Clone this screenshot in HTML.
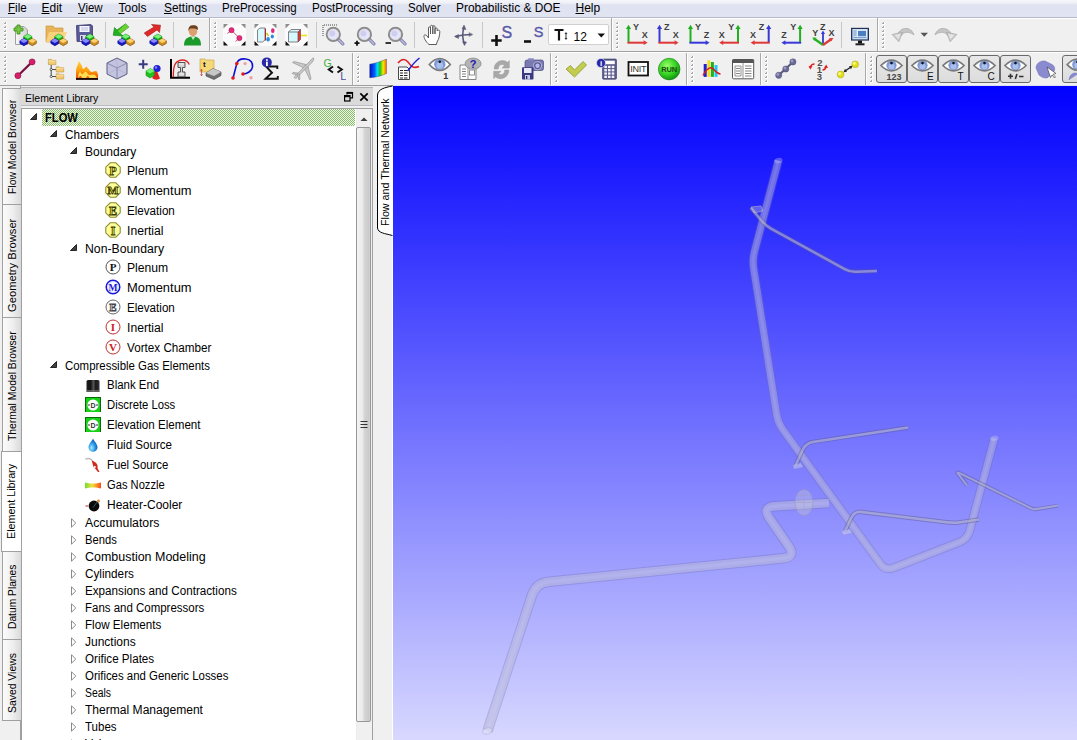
<!DOCTYPE html>
<html><head><meta charset="utf-8">
<style>
*{box-sizing:border-box}
html,body{margin:0;padding:0}
body{width:1077px;height:740px;overflow:hidden;position:relative;background:#f0f0f0;font-family:"Liberation Sans",sans-serif;color:#000}
.a{position:absolute}
.t{position:absolute;white-space:nowrap;line-height:1;font-size:12px}
#menubar{left:0;top:0;width:1077px;height:18px;background:linear-gradient(#f5f6fa 0,#eff0f7 3px,#dfe2f0 5px,#e1e4f1 16px,#e3e6f2 17px);border-bottom:1px solid #b6b9c8}
#menubar .t{top:2px;font-size:12px;color:#000}
.u{text-decoration:underline;text-underline-offset:1px}
.hl{left:0;width:1077px;height:1px}
.grip{position:absolute;width:3px;background-image:radial-gradient(circle at 1px 1px,#9a9a9a 0.9px,transparent 1.1px);background-size:3px 4px}
.vsep{position:absolute;width:2px;border-left:1px solid #c5c5c5;border-right:1px solid #ffffff}
.tbend{position:absolute;width:2px;border-left:1px solid #a9a9a9;border-right:1px solid #fff}
.tab{left:2px;width:19px;border:1px solid #a0a0a0;border-right:none;background:linear-gradient(90deg,#fbfbfb 0,#eeeeee 55%,#d9d9d9 100%)}
.tab.sel{left:1px;width:20px;background:#fff;border-color:#a0a0a0}
.rt{position:absolute;white-space:nowrap;font-size:11px;line-height:1;transform-origin:0 0}
.vt{position:absolute;left:50%;top:50%;white-space:nowrap;font-size:11px;line-height:11px;text-align:center;transform:translate(-50%,-50%) rotate(-90deg)}
</style></head>
<body>
<svg width="0" height="0" style="position:absolute">
<defs>
<linearGradient id="gnoz" x1="0" x2="1"><stop offset="0" stop-color="#6ee02a"/><stop offset="0.45" stop-color="#f0e040"/><stop offset="1" stop-color="#ff4a10"/></linearGradient>
<radialGradient id="gdrop" cx="0.35" cy="0.7" r="0.7"><stop offset="0" stop-color="#a8e8ff"/><stop offset="0.5" stop-color="#2a9ee8"/><stop offset="1" stop-color="#0a50b8"/></radialGradient>
<linearGradient id="gblank" x1="0" x2="1"><stop offset="0" stop-color="#222"/><stop offset="0.3" stop-color="#111"/><stop offset="0.55" stop-color="#555"/><stop offset="0.7" stop-color="#1a1a1a"/><stop offset="1" stop-color="#333"/></linearGradient>
<symbol id="oct" viewBox="0 0 16 16"><path d="M5.2 0.8 L10.8 0.8 L15.2 5.2 L15.2 10.8 L10.8 15.2 L5.2 15.2 L0.8 10.8 L0.8 5.2 Z" fill="#ffff9a" stroke="#8c8c30" stroke-width="1.1"/></symbol>
<symbol id="i-bP" viewBox="0 0 16 16"><use href="#oct"/><text x="8" y="12.6" font-family="Liberation Serif" font-weight="bold" font-size="12" text-anchor="middle" fill="#f8f040" stroke="#3a3a08" stroke-width="0.8">P</text></symbol>
<symbol id="i-bM" viewBox="0 0 16 16"><use href="#oct"/><text x="8" y="12.3" font-family="Liberation Serif" font-weight="bold" font-size="11" text-anchor="middle" fill="#f8f040" stroke="#3a3a08" stroke-width="0.8" textLength="11" lengthAdjust="spacingAndGlyphs">M</text></symbol>
<symbol id="i-bE" viewBox="0 0 16 16"><use href="#oct"/><text x="8" y="12.6" font-family="Liberation Serif" font-weight="bold" font-size="12" text-anchor="middle" fill="#f8f040" stroke="#3a3a08" stroke-width="0.8">E</text></symbol>
<symbol id="i-bI" viewBox="0 0 16 16"><use href="#oct"/><text x="8" y="12.6" font-family="Liberation Serif" font-weight="bold" font-size="12" text-anchor="middle" fill="#f8f040" stroke="#3a3a08" stroke-width="0.8">I</text></symbol>
<symbol id="i-nP" viewBox="0 0 16 16"><circle cx="8" cy="8" r="7" fill="#fff" stroke="#555" stroke-width="1"/><text x="8" y="12.2" font-family="Liberation Serif" font-weight="bold" font-size="11" text-anchor="middle" fill="#111">P</text></symbol>
<symbol id="i-nM" viewBox="0 0 16 16"><circle cx="8" cy="8" r="6.8" fill="#fff" stroke="#1818d8" stroke-width="1.5"/><circle cx="8" cy="8" r="5.3" fill="none" stroke="#c8c8ff" stroke-width="0.8"/><text x="8" y="11.8" font-family="Liberation Serif" font-weight="bold" font-size="10" text-anchor="middle" fill="#1818d8" textLength="9" lengthAdjust="spacingAndGlyphs">M</text></symbol>
<symbol id="i-nE" viewBox="0 0 16 16"><circle cx="8" cy="8" r="7" fill="#fff" stroke="#666" stroke-width="1"/><text x="8" y="12.2" font-family="Liberation Serif" font-weight="bold" font-size="11" text-anchor="middle" fill="#e8e8e8" stroke="#444" stroke-width="0.8">E</text></symbol>
<symbol id="i-nI" viewBox="0 0 16 16"><circle cx="8" cy="8" r="7" fill="#fff" stroke="#c03030" stroke-width="1"/><text x="8" y="12.2" font-family="Liberation Serif" font-weight="bold" font-size="11" text-anchor="middle" fill="#d02020">I</text></symbol>
<symbol id="i-nV" viewBox="0 0 16 16"><circle cx="8" cy="8" r="7" fill="#fff" stroke="#c03030" stroke-width="1"/><text x="8" y="12.2" font-family="Liberation Serif" font-weight="bold" font-size="11" text-anchor="middle" fill="#d02020">V</text></symbol>
<symbol id="i-blank" viewBox="0 0 16 16"><rect x="1.5" y="4" width="13" height="13" rx="1.5" fill="url(#gblank)"/><rect x="2" y="14" width="12" height="3" fill="#777" opacity="0.7"/></symbol>
<symbol id="i-disc" viewBox="0 0 16 16"><rect x="0.5" y="1.5" width="15" height="15" fill="#16d016" stroke="#0a6a0a"/><circle cx="8" cy="9" r="5.6" fill="#fff"/><path d="M2.8 9 L5 9 M13.2 9 L11 9" stroke="#333" stroke-width="1"/><text x="8" y="11.6" font-family="Liberation Sans" font-weight="bold" font-size="7" text-anchor="middle" fill="#333">D</text></symbol>
<symbol id="i-drop" viewBox="0 0 16 16"><path d="M8 2.5 C9 5 12.5 8 12.5 11.3 C12.5 14 10.5 15.8 8 15.8 C5.5 15.8 3.5 14 3.5 11.3 C3.5 8 7 5 8 2.5 Z" fill="url(#gdrop)"/></symbol>
<symbol id="i-fuel" viewBox="0 0 16 16"><path d="M0.5 3 C3 2 5 2.3 7 4" stroke="#bbb" stroke-width="1.6" fill="none"/><path d="M6.5 4 L10.5 6.5 C12.5 8 13 10.5 12.5 12 L14.5 16 L13 16 L10.5 13 L8.5 11 Z" fill="#d02a20"/><circle cx="9.8" cy="11" r="1" fill="#fff"/></symbol>
<symbol id="i-nozzle" viewBox="0 0 16 16"><path d="M0 6.5 L5 7.6 L11 7.6 L16 6.5 L16 12.5 L11 11.4 L5 11.4 L0 12.5 Z" fill="url(#gnoz)"/></symbol>
<symbol id="i-heater" viewBox="0 0 16 16"><circle cx="9" cy="10" r="5.4" fill="#0a0a0a"/><path d="M0.5 10 L3 10" stroke="#d04040" stroke-width="1.2"/><path d="M8 11.5 L12.5 5.5" stroke="#3a6a8a" stroke-width="0.8"/><circle cx="13.5" cy="5" r="1.4" fill="#e08a30"/></symbol>
</defs></svg>

<!-- menu bar -->
<div id="menubar" class="a">
  <span class="t" style="left:7.5px;transform:scaleX(0.967);transform-origin:0 0"><span class="u">F</span>ile</span>
  <span class="t" style="left:41.5px;transform:scaleX(1.0);transform-origin:0 0"><span class="u">E</span>dit</span>
  <span class="t" style="left:77.5px;transform:scaleX(0.954);transform-origin:0 0"><span class="u">V</span>iew</span>
  <span class="t" style="left:118.5px;transform:scaleX(1.0);transform-origin:0 0"><span class="u">T</span>ools</span>
  <span class="t" style="left:163.5px;transform:scaleX(0.99);transform-origin:0 0"><span class="u">S</span>ettings</span>
  <span class="t" style="left:221.5px;transform:scaleX(0.958);transform-origin:0 0">PreProcessing</span>
  <span class="t" style="left:311.5px;transform:scaleX(0.971);transform-origin:0 0">PostProcessing</span>
  <span class="t" style="left:407.5px;transform:scaleX(0.958);transform-origin:0 0">Solver</span>
  <span class="t" style="left:455.5px;transform:scaleX(0.992);transform-origin:0 0">Probabilistic &amp; DOE</span>
  <span class="t" style="left:575.5px;transform:scaleX(1.0);transform-origin:0 0"><span class="u">H</span>elp</span>
</div>
<div class="a hl" style="top:18px;background:#fff"></div>
<!-- toolbar row separators -->
<div class="a hl" style="top:51px;background:#a0a0a0"></div>
<div class="a hl" style="top:52px;background:#fff"></div>
<div class="a hl" style="top:85px;background:#a0a0a0;width:393px"></div><div class="a" style="left:393px;top:85px;width:684px;height:1px;background:#dcdcf4"></div>

<!-- toolbar -->
<div class="a" style="left:4px;top:22px;width:2px;height:2px;background:linear-gradient(135deg,transparent 0 30%,#a8a8a8 30% 100%);border-right:1px solid #fff;border-bottom:1px solid #fff;box-sizing:content-box"></div><div class="a" style="left:4px;top:26px;width:2px;height:2px;background:linear-gradient(135deg,transparent 0 30%,#a8a8a8 30% 100%);border-right:1px solid #fff;border-bottom:1px solid #fff;box-sizing:content-box"></div><div class="a" style="left:4px;top:30px;width:2px;height:2px;background:linear-gradient(135deg,transparent 0 30%,#a8a8a8 30% 100%);border-right:1px solid #fff;border-bottom:1px solid #fff;box-sizing:content-box"></div><div class="a" style="left:4px;top:34px;width:2px;height:2px;background:linear-gradient(135deg,transparent 0 30%,#a8a8a8 30% 100%);border-right:1px solid #fff;border-bottom:1px solid #fff;box-sizing:content-box"></div><div class="a" style="left:4px;top:38px;width:2px;height:2px;background:linear-gradient(135deg,transparent 0 30%,#a8a8a8 30% 100%);border-right:1px solid #fff;border-bottom:1px solid #fff;box-sizing:content-box"></div><div class="a" style="left:4px;top:42px;width:2px;height:2px;background:linear-gradient(135deg,transparent 0 30%,#a8a8a8 30% 100%);border-right:1px solid #fff;border-bottom:1px solid #fff;box-sizing:content-box"></div><div class="a" style="left:4px;top:46px;width:2px;height:2px;background:linear-gradient(135deg,transparent 0 30%,#a8a8a8 30% 100%);border-right:1px solid #fff;border-bottom:1px solid #fff;box-sizing:content-box"></div>
<svg class="a" style="left:13px;top:23px" width="24" height="24" viewBox="0 0 24 24"><defs><linearGradient id="pg" x1="0" x2="1"><stop offset="0" stop-color="#fafafa"/><stop offset="1" stop-color="#d0d0d0"/></linearGradient></defs><path d="M2.5 3.5 H11 L14.5 7 V21.5 H2.5 Z" fill="url(#pg)" stroke="#a0a0a0"/><path d="M4 2 h3 v3 h3 v3 h-3 v3 h-3 v-3 h-3 v-3 h3 Z" fill="#72c83e" stroke="#3a8a1a" stroke-width="0.8"/><path d="M10.8 13.4 L14.8 11.100000000000001 L18.8 13.4 L18.8 16.0 L14.8 18.3 L10.8 16.0 Z" fill="#10b010" stroke="#0a700a" stroke-width="0.7"/><path d="M10.8 13.4 L14.8 11.100000000000001 L18.8 13.4 L14.8 15.7 Z" fill="#7cf07c"/><path d="M6.9 17.8 L10.9 15.5 L14.9 17.8 L14.9 20.400000000000002 L10.9 22.700000000000003 L6.9 20.400000000000002 Z" fill="#1a1acc" stroke="#0a0a80" stroke-width="0.7"/><path d="M6.9 17.8 L10.9 15.5 L14.9 17.8 L10.9 20.1 Z" fill="#8a8aff"/><path d="M15.3 17.8 L19.3 15.5 L23.3 17.8 L23.3 20.400000000000002 L19.3 22.700000000000003 L15.3 20.400000000000002 Z" fill="#d09020" stroke="#805010" stroke-width="0.7"/><path d="M15.3 17.8 L19.3 15.5 L23.3 17.8 L19.3 20.1 Z" fill="#ffd070"/></svg>
<svg class="a" style="left:44px;top:23px" width="24" height="24" viewBox="0 0 24 24"><path d="M2 3 H9 L11 5 H19 V19 H2 Z" fill="#e8b45a" stroke="#c89030" stroke-width="0.6"/><path d="M5 9 H23 L19 19 H2 Z" fill="#f8d480" opacity="0.9"/><path d="M10.8 13.4 L14.8 11.100000000000001 L18.8 13.4 L18.8 16.0 L14.8 18.3 L10.8 16.0 Z" fill="#10b010" stroke="#0a700a" stroke-width="0.7"/><path d="M10.8 13.4 L14.8 11.100000000000001 L18.8 13.4 L14.8 15.7 Z" fill="#7cf07c"/><path d="M6.9 17.8 L10.9 15.5 L14.9 17.8 L14.9 20.400000000000002 L10.9 22.700000000000003 L6.9 20.400000000000002 Z" fill="#1a1acc" stroke="#0a0a80" stroke-width="0.7"/><path d="M6.9 17.8 L10.9 15.5 L14.9 17.8 L10.9 20.1 Z" fill="#8a8aff"/><path d="M15.3 17.8 L19.3 15.5 L23.3 17.8 L23.3 20.400000000000002 L19.3 22.700000000000003 L15.3 20.400000000000002 Z" fill="#d09020" stroke="#805010" stroke-width="0.7"/><path d="M15.3 17.8 L19.3 15.5 L23.3 17.8 L19.3 20.1 Z" fill="#ffd070"/></svg>
<svg class="a" style="left:75px;top:23px" width="24" height="24" viewBox="0 0 24 24"><path d="M1.5 2.5 L16 1.5 L17.5 3 V18 L2 18.5 Z" fill="#5a5a98" stroke="#3a3a70" stroke-width="0.8"/><rect x="4.5" y="3" width="10" height="6" fill="#f4f4ff"/><path d="M6 5 H13 M6 7 H13" stroke="#b0b0d0" stroke-width="0.8"/><rect x="5" y="12" width="6" height="6" fill="#d8d8f0"/><rect x="6" y="13" width="1.5" height="4" fill="#3a3a70"/><path d="M10.8 13.4 L14.8 11.100000000000001 L18.8 13.4 L18.8 16.0 L14.8 18.3 L10.8 16.0 Z" fill="#10b010" stroke="#0a700a" stroke-width="0.7"/><path d="M10.8 13.4 L14.8 11.100000000000001 L18.8 13.4 L14.8 15.7 Z" fill="#7cf07c"/><path d="M6.9 17.8 L10.9 15.5 L14.9 17.8 L14.9 20.400000000000002 L10.9 22.700000000000003 L6.9 20.400000000000002 Z" fill="#1a1acc" stroke="#0a0a80" stroke-width="0.7"/><path d="M6.9 17.8 L10.9 15.5 L14.9 17.8 L10.9 20.1 Z" fill="#8a8aff"/><path d="M15.3 17.8 L19.3 15.5 L23.3 17.8 L23.3 20.400000000000002 L19.3 22.700000000000003 L15.3 20.400000000000002 Z" fill="#d09020" stroke="#805010" stroke-width="0.7"/><path d="M15.3 17.8 L19.3 15.5 L23.3 17.8 L19.3 20.1 Z" fill="#ffd070"/></svg>
<div class="a" style="left:105px;top:22px;width:1px;height:26px;background:#c8c8c8"></div>
<svg class="a" style="left:111px;top:23px" width="24" height="24" viewBox="0 0 24 24"><path d="M2.2 12.3 L3.5 4.5 L6 7 L14.5 0.8 L17.8 4 L9.5 10.5 L12 13 Z" fill="#22b022" stroke="#168016" stroke-width="0.6"/><path d="M14.5 0.8 L17.8 4 L9.5 10.5 L7 8" fill="#8ae03a" opacity="0.7"/><path d="M10.8 13.4 L14.8 11.100000000000001 L18.8 13.4 L18.8 16.0 L14.8 18.3 L10.8 16.0 Z" fill="#10b010" stroke="#0a700a" stroke-width="0.7"/><path d="M10.8 13.4 L14.8 11.100000000000001 L18.8 13.4 L14.8 15.7 Z" fill="#7cf07c"/><path d="M6.9 17.8 L10.9 15.5 L14.9 17.8 L14.9 20.400000000000002 L10.9 22.700000000000003 L6.9 20.400000000000002 Z" fill="#1a1acc" stroke="#0a0a80" stroke-width="0.7"/><path d="M6.9 17.8 L10.9 15.5 L14.9 17.8 L10.9 20.1 Z" fill="#8a8aff"/><path d="M15.3 17.8 L19.3 15.5 L23.3 17.8 L23.3 20.400000000000002 L19.3 22.700000000000003 L15.3 20.400000000000002 Z" fill="#d09020" stroke="#805010" stroke-width="0.7"/><path d="M15.3 17.8 L19.3 15.5 L23.3 17.8 L19.3 20.1 Z" fill="#ffd070"/></svg>
<svg class="a" style="left:143px;top:23px" width="24" height="24" viewBox="0 0 24 24"><path d="M17.5 2.2 L16.5 9.5 L14 7 L4.5 13.5 L1.2 10 L11 4 L8.5 1.5 Z" fill="#e02a2a" stroke="#a01818" stroke-width="0.6"/><path d="M10.8 13.4 L14.8 11.100000000000001 L18.8 13.4 L18.8 16.0 L14.8 18.3 L10.8 16.0 Z" fill="#10b010" stroke="#0a700a" stroke-width="0.7"/><path d="M10.8 13.4 L14.8 11.100000000000001 L18.8 13.4 L14.8 15.7 Z" fill="#7cf07c"/><path d="M6.9 17.8 L10.9 15.5 L14.9 17.8 L14.9 20.400000000000002 L10.9 22.700000000000003 L6.9 20.400000000000002 Z" fill="#1a1acc" stroke="#0a0a80" stroke-width="0.7"/><path d="M6.9 17.8 L10.9 15.5 L14.9 17.8 L10.9 20.1 Z" fill="#8a8aff"/><path d="M15.3 17.8 L19.3 15.5 L23.3 17.8 L23.3 20.400000000000002 L19.3 22.700000000000003 L15.3 20.400000000000002 Z" fill="#d09020" stroke="#805010" stroke-width="0.7"/><path d="M15.3 17.8 L19.3 15.5 L23.3 17.8 L19.3 20.1 Z" fill="#ffd070"/></svg>
<div class="a" style="left:173px;top:22px;width:1px;height:26px;background:#c8c8c8"></div>
<svg class="a" style="left:180px;top:23px" width="24" height="24" viewBox="0 0 24 24"><path d="M4 22.5 C4 16 7.5 13.5 13 13.5 C18.5 13.5 21 16 21 22.5 Z" fill="#1a9a2a"/><path d="M11 13.5 L13 17 L15.5 13.5" fill="#c8f0c8"/><ellipse cx="13" cy="8.3" rx="4.2" ry="5" fill="#dca070"/><path d="M8.5 8 C8 3 11 2 13.5 2.2 C17 2.3 18.5 4 17.8 7 C16 5 13 5.5 10 5.5 Z" fill="#6a4020"/></svg>
<div class="a" style="left:209px;top:18px;width:1px;height:33px;background:#a9a9a9"></div><div class="a" style="left:210px;top:18px;width:1px;height:33px;background:#fff"></div>
<div class="a" style="left:214px;top:22px;width:2px;height:2px;background:linear-gradient(135deg,transparent 0 30%,#a8a8a8 30% 100%);border-right:1px solid #fff;border-bottom:1px solid #fff;box-sizing:content-box"></div><div class="a" style="left:214px;top:26px;width:2px;height:2px;background:linear-gradient(135deg,transparent 0 30%,#a8a8a8 30% 100%);border-right:1px solid #fff;border-bottom:1px solid #fff;box-sizing:content-box"></div><div class="a" style="left:214px;top:30px;width:2px;height:2px;background:linear-gradient(135deg,transparent 0 30%,#a8a8a8 30% 100%);border-right:1px solid #fff;border-bottom:1px solid #fff;box-sizing:content-box"></div><div class="a" style="left:214px;top:34px;width:2px;height:2px;background:linear-gradient(135deg,transparent 0 30%,#a8a8a8 30% 100%);border-right:1px solid #fff;border-bottom:1px solid #fff;box-sizing:content-box"></div><div class="a" style="left:214px;top:38px;width:2px;height:2px;background:linear-gradient(135deg,transparent 0 30%,#a8a8a8 30% 100%);border-right:1px solid #fff;border-bottom:1px solid #fff;box-sizing:content-box"></div><div class="a" style="left:214px;top:42px;width:2px;height:2px;background:linear-gradient(135deg,transparent 0 30%,#a8a8a8 30% 100%);border-right:1px solid #fff;border-bottom:1px solid #fff;box-sizing:content-box"></div><div class="a" style="left:214px;top:46px;width:2px;height:2px;background:linear-gradient(135deg,transparent 0 30%,#a8a8a8 30% 100%);border-right:1px solid #fff;border-bottom:1px solid #fff;box-sizing:content-box"></div>
<svg class="a" style="left:223px;top:23px" width="24" height="24" viewBox="0 0 24 24"><rect x="0" y="0.5" width="23" height="22.5" fill="#fbfbfb"/><path d="M0.5 1 H5 L0.5 5.5 Z M22.5 1 H18 L22.5 5.5 Z" fill="#8c8c8c"/><path d="M0.5 22.5 H5 L0.5 18 Z M22.5 22.5 H18 L22.5 18 Z" fill="#111"/><path d="M4.3 10.5 L8.5 7.2 L16.4 15.1 L12.5 18.5" stroke="#c03060" stroke-width="0.8" fill="none"/><circle cx="8.5" cy="7.2" r="2.6" fill="#e8287a" stroke="#a01850" stroke-width="0.5"/><circle cx="16.4" cy="15.1" r="2.6" fill="#e8287a" stroke="#a01850" stroke-width="0.5"/></svg>
<svg class="a" style="left:254px;top:23px" width="24" height="24" viewBox="0 0 24 24"><rect x="0" y="0.5" width="23" height="22.5" fill="#fbfbfb"/><path d="M0.5 1 H5 L0.5 5.5 Z M22.5 1 H18 L22.5 5.5 Z" fill="#8c8c8c"/><path d="M0.5 22.5 H5 L0.5 18 Z M22.5 22.5 H18 L22.5 18 Z" fill="#111"/><path d="M3.5 7 L6 5 H11 V17 L8.5 19 H3.5 Z" fill="#d8f8ff" stroke="#505050" stroke-width="0.7"/><path d="M11 5 L12 6 V18 L11 17" fill="#c02020"/><path d="M12.5 10 L14.5 13" stroke="#e0c020" stroke-width="1.5"/><ellipse cx="14.1" cy="16.3" rx="1.8" ry="2.2" fill="#2a8ae0"/><ellipse cx="18.3" cy="13.5" rx="1.6" ry="1.9" fill="#2a8ae0"/><ellipse cx="18.8" cy="7.7" rx="1.8" ry="2.4" fill="#e0287a"/></svg>
<svg class="a" style="left:285px;top:23px" width="24" height="24" viewBox="0 0 24 24"><rect x="0" y="0.5" width="23" height="22.5" fill="#fbfbfb"/><path d="M0.5 1 H5 L0.5 5.5 Z M22.5 1 H18 L22.5 5.5 Z" fill="#8c8c8c"/><path d="M0.5 22.5 H5 L0.5 18 Z M22.5 22.5 H18 L22.5 18 Z" fill="#111"/><path d="M3.5 9 L6 6.5 H15.5 V16.5 L13 19 H3.5 Z" fill="#d8f8ff" stroke="#505050" stroke-width="0.7"/><path d="M3.5 9 H13 V19 M13 9 L15.5 6.5" stroke="#505050" stroke-width="0.7" fill="none"/><path d="M13 9 L15.5 6.5 V16.5 L13 19 Z" fill="#c82020" opacity="0.85"/><path d="M16 12.5 H22" stroke="#f0e020" stroke-width="1.6"/></svg>
<div class="a" style="left:316px;top:22px;width:1px;height:26px;background:#c8c8c8"></div>
<svg class="a" style="left:321px;top:23px" width="24" height="24" viewBox="0 0 24 24"><path d="M2 13 V2 H17" fill="none" stroke="#333" stroke-width="0.9" stroke-dasharray="1 1"/><path d="M17.1 16.2 L21.8 20.9" stroke="#7878a0" stroke-width="3.2" stroke-linecap="round"/><path d="M17.1 16.2 L21.8 20.9" stroke="#b8b8e0" stroke-width="1.6" stroke-linecap="round"/><circle cx="12.3" cy="11.4" r="6.6" fill="none" stroke="#8a8a8a" stroke-width="2"/><circle cx="12.3" cy="11.4" r="5.4" fill="#e6e6fa" stroke="#c8c8c8" stroke-width="0.6"/><circle cx="11.3" cy="10.4" r="3" fill="#c8c8f0" opacity="0.8"/></svg>
<svg class="a" style="left:352px;top:23px" width="24" height="24" viewBox="0 0 24 24"><path d="M17.2 16.2 L21.9 20.9" stroke="#7878a0" stroke-width="3.2" stroke-linecap="round"/><path d="M17.2 16.2 L21.9 20.9" stroke="#b8b8e0" stroke-width="1.6" stroke-linecap="round"/><circle cx="12.4" cy="11.4" r="6.6" fill="none" stroke="#8a8a8a" stroke-width="2"/><circle cx="12.4" cy="11.4" r="5.4" fill="#e6e6fa" stroke="#c8c8c8" stroke-width="0.6"/><circle cx="11.4" cy="10.4" r="3" fill="#c8c8f0" opacity="0.8"/><path d="M5 17.7 V22.7 M2.5 20.2 H7.5" stroke="#111" stroke-width="1.8"/></svg>
<svg class="a" style="left:383px;top:23px" width="24" height="24" viewBox="0 0 24 24"><path d="M17.3 16.2 L22.0 20.9" stroke="#7878a0" stroke-width="3.2" stroke-linecap="round"/><path d="M17.3 16.2 L22.0 20.9" stroke="#b8b8e0" stroke-width="1.6" stroke-linecap="round"/><circle cx="12.5" cy="11.4" r="6.6" fill="none" stroke="#8a8a8a" stroke-width="2"/><circle cx="12.5" cy="11.4" r="5.4" fill="#e6e6fa" stroke="#c8c8c8" stroke-width="0.6"/><circle cx="11.5" cy="10.4" r="3" fill="#c8c8f0" opacity="0.8"/><path d="M2.5 20 H8" stroke="#222" stroke-width="1.8"/></svg>
<div class="a" style="left:414px;top:22px;width:1px;height:26px;background:#c8c8c8"></div>
<svg class="a" style="left:421px;top:23px" width="24" height="24" viewBox="0 0 24 24"><path d="M8 21.5 C5 19 2.5 14.5 3 12.5 C3.5 11.5 5 11.8 6 13 L7.5 15 V5 C7.5 3.5 9.5 3.5 9.5 5 V11 V3.5 C9.5 1.8 11.8 1.8 11.8 3.5 V11 V3.8 C11.8 2.2 14 2.2 14 3.8 V11 V6 C14 4.5 16.2 4.5 16.2 6 V8 C16.5 6.8 18.8 6.8 18.8 8.5 C18.8 12 18 16 16 19 L15.5 21.5 Z" fill="#fff" stroke="#5a5a5a" stroke-width="1"/></svg>
<svg class="a" style="left:452px;top:23px" width="24" height="24" viewBox="0 0 24 24"><g fill="#5a5a7a" stroke="#5a5a7a"><path d="M12 4 C10.5 9 10 15 12.5 21" fill="none" stroke-width="1.6"/><path d="M3.5 13.5 C9 12 14 11.5 19.5 11.5" fill="none" stroke-width="1.6"/><path d="M12 2 L14 6.5 L10 6 Z" stroke-width="0.5"/><path d="M12.5 22.5 L10.5 18.5 L14.5 19 Z" stroke-width="0.5"/><path d="M2.5 13.5 L6.5 11.5 L6.5 15.5 Z" stroke-width="0.5"/><path d="M21 11.5 L17 9.5 L17 13.5 Z" stroke-width="0.5" opacity="0.7"/></g></svg>
<div class="a" style="left:482px;top:22px;width:1px;height:26px;background:#c8c8c8"></div>
<svg class="a" style="left:489px;top:23px" width="24" height="24" viewBox="0 0 24 24"><path d="M7.5 12 V23 M2.2 17.5 H12.7" stroke="#111" stroke-width="2.6"/><text x="12.6" y="14.8" font-family="Liberation Sans" font-size="16" fill="#5a5aa8" stroke="#5a5aa8" stroke-width="0.4">S</text></svg>
<svg class="a" style="left:521px;top:23px" width="24" height="24" viewBox="0 0 24 24"><path d="M3 18.5 H10" stroke="#111" stroke-width="2.6"/><text x="12.8" y="14.2" font-family="Liberation Sans" font-size="14.5" fill="#5a5aa8" stroke="#5a5aa8" stroke-width="0.4">S</text></svg>
<div class="a" style="left:548px;top:24px;width:61px;height:21px;background:#fff;border:1px solid #d0d0d0;border-radius:2px"></div>
<svg class="a" style="left:554px;top:28px" width="16" height="14"><path d="M0.5 2 H9.5 M5 2 V12.5" stroke="#111" stroke-width="2.2"/><path d="M12 5 V11" stroke="#333" stroke-width="1"/><path d="M10.5 6 L12 4 L13.5 6 Z M10.5 10 L12 12 L13.5 10 Z" fill="#333"/></svg>
<span class="t" style="left:573.5px;top:30.5px;font-size:12px">12</span>
<svg class="a" style="left:597px;top:33px" width="9" height="5"><path d="M0.5 0.5 H8 L4.25 4.5 Z" fill="#111"/></svg>
<div class="a" style="left:611px;top:18px;width:1px;height:33px;background:#a9a9a9"></div><div class="a" style="left:612px;top:18px;width:1px;height:33px;background:#fff"></div>
<div class="a" style="left:616px;top:22px;width:2px;height:2px;background:linear-gradient(135deg,transparent 0 30%,#a8a8a8 30% 100%);border-right:1px solid #fff;border-bottom:1px solid #fff;box-sizing:content-box"></div><div class="a" style="left:616px;top:26px;width:2px;height:2px;background:linear-gradient(135deg,transparent 0 30%,#a8a8a8 30% 100%);border-right:1px solid #fff;border-bottom:1px solid #fff;box-sizing:content-box"></div><div class="a" style="left:616px;top:30px;width:2px;height:2px;background:linear-gradient(135deg,transparent 0 30%,#a8a8a8 30% 100%);border-right:1px solid #fff;border-bottom:1px solid #fff;box-sizing:content-box"></div><div class="a" style="left:616px;top:34px;width:2px;height:2px;background:linear-gradient(135deg,transparent 0 30%,#a8a8a8 30% 100%);border-right:1px solid #fff;border-bottom:1px solid #fff;box-sizing:content-box"></div><div class="a" style="left:616px;top:38px;width:2px;height:2px;background:linear-gradient(135deg,transparent 0 30%,#a8a8a8 30% 100%);border-right:1px solid #fff;border-bottom:1px solid #fff;box-sizing:content-box"></div><div class="a" style="left:616px;top:42px;width:2px;height:2px;background:linear-gradient(135deg,transparent 0 30%,#a8a8a8 30% 100%);border-right:1px solid #fff;border-bottom:1px solid #fff;box-sizing:content-box"></div><div class="a" style="left:616px;top:46px;width:2px;height:2px;background:linear-gradient(135deg,transparent 0 30%,#a8a8a8 30% 100%);border-right:1px solid #fff;border-bottom:1px solid #fff;box-sizing:content-box"></div>
<svg class="a" style="left:622px;top:23px" width="28" height="24" viewBox="0 0 28 24"><path d="M6.5 20 V5" stroke="#20b020" stroke-width="2"/><path d="M6.5 1.8 L9.1 6 L3.9 6 Z" fill="#20b020"/><path d="M5.5 19.7 H22.6" stroke="#e03838" stroke-width="2"/><path d="M25.6 19.7 L21.6 17.3 L21.6 22.1 Z" fill="#e03838"/><text x="11.0" y="7.3999999999999995" font-family="Liberation Sans" font-weight="bold" font-size="9" fill="#404040">Y</text><text x="19.7" y="15.4" font-family="Liberation Sans" font-weight="bold" font-size="9" fill="#404040">X</text></svg>
<svg class="a" style="left:653px;top:23px" width="28" height="24" viewBox="0 0 28 24"><path d="M6.5 20 V5" stroke="#3838d8" stroke-width="2"/><path d="M6.5 1.8 L9.1 6 L3.9 6 Z" fill="#3838d8"/><path d="M5.5 19.7 H22.6" stroke="#e03838" stroke-width="2"/><path d="M25.6 19.7 L21.6 17.3 L21.6 22.1 Z" fill="#e03838"/><text x="11.0" y="7.3999999999999995" font-family="Liberation Sans" font-weight="bold" font-size="9" fill="#404040">Z</text><text x="19.7" y="15.4" font-family="Liberation Sans" font-weight="bold" font-size="9" fill="#404040">X</text></svg>
<svg class="a" style="left:684px;top:23px" width="28" height="24" viewBox="0 0 28 24"><path d="M6.5 20 V5" stroke="#20b020" stroke-width="2"/><path d="M6.5 1.8 L9.1 6 L3.9 6 Z" fill="#20b020"/><path d="M5.5 19.7 H22.6" stroke="#3838d8" stroke-width="2"/><path d="M25.6 19.7 L21.6 17.3 L21.6 22.1 Z" fill="#3838d8"/><text x="11.0" y="7.3999999999999995" font-family="Liberation Sans" font-weight="bold" font-size="9" fill="#404040">Y</text><text x="19.7" y="15.4" font-family="Liberation Sans" font-weight="bold" font-size="9" fill="#404040">Z</text></svg>
<svg class="a" style="left:716px;top:23px" width="28" height="24" viewBox="0 0 28 24"><path d="M22 20 V5" stroke="#20b020" stroke-width="2"/><path d="M22 1.8 L24.6 6 L19.4 6 Z" fill="#20b020"/><path d="M23 19.7 H6.2" stroke="#e03838" stroke-width="2"/><path d="M3.2 19.7 L7.2 17.3 L7.2 22.1 Z" fill="#e03838"/><text x="2.7" y="15.4" font-family="Liberation Sans" font-weight="bold" font-size="9" fill="#404040">X</text><text x="12.2" y="7.3999999999999995" font-family="Liberation Sans" font-weight="bold" font-size="9" fill="#404040">Y</text></svg>
<svg class="a" style="left:747px;top:23px" width="28" height="24" viewBox="0 0 28 24"><path d="M21.7 20 V5" stroke="#3838d8" stroke-width="2"/><path d="M21.7 1.8 L24.3 6 L19.099999999999998 6 Z" fill="#3838d8"/><path d="M22.7 19.7 H6.6" stroke="#e03838" stroke-width="2"/><path d="M3.6 19.7 L7.6 17.3 L7.6 22.1 Z" fill="#e03838"/><text x="2.9000000000000004" y="15.4" font-family="Liberation Sans" font-weight="bold" font-size="9" fill="#404040">X</text><text x="11.7" y="7.3999999999999995" font-family="Liberation Sans" font-weight="bold" font-size="9" fill="#404040">Z</text></svg>
<svg class="a" style="left:778px;top:23px" width="28" height="24" viewBox="0 0 28 24"><path d="M22.1 20 V5" stroke="#20b020" stroke-width="2"/><path d="M22.1 1.8 L24.700000000000003 6 L19.5 6 Z" fill="#20b020"/><path d="M23.1 19.7 H6.4" stroke="#3838d8" stroke-width="2"/><path d="M3.4 19.7 L7.4 17.3 L7.4 22.1 Z" fill="#3838d8"/><text x="3.2" y="15.4" font-family="Liberation Sans" font-weight="bold" font-size="9" fill="#404040">Z</text><text x="12.2" y="7.3999999999999995" font-family="Liberation Sans" font-weight="bold" font-size="9" fill="#404040">Y</text></svg>
<svg class="a" style="left:809px;top:23px" width="28" height="24" viewBox="0 0 28 24"><path d="M14 22 V10" stroke="#3838d8" stroke-width="1.8"/><path d="M14 7.5 L16 11 L12 11 Z" fill="#3838d8"/><path d="M14 22 L5 15.5" stroke="#20b020" stroke-width="2.2"/><path d="M3.2 14.5 L7.5 14.8 L5.5 18 Z" fill="#20b020"/><path d="M14 22 L22.5 16" stroke="#e03838" stroke-width="2.2"/><path d="M24.5 15 L20 15.2 L22 18.5 Z" fill="#e03838"/><text x="3.3" y="12.8" font-family="Liberation Sans" font-weight="bold" font-size="9" fill="#404040">Y</text><text x="11" y="6.5" font-family="Liberation Sans" font-weight="bold" font-size="9" fill="#404040">Z</text><text x="19.5" y="12.8" font-family="Liberation Sans" font-weight="bold" font-size="9" fill="#404040">X</text></svg>
<div class="a" style="left:841px;top:22px;width:1px;height:26px;background:#c8c8c8"></div>
<svg class="a" style="left:848px;top:23px" width="24" height="24" viewBox="0 0 24 24"><rect x="3" y="4.8" width="18" height="12.8" fill="#223355"/><rect x="4.3" y="6" width="15.4" height="10.4" fill="#c8dcf4"/><rect x="9.5" y="7.3" width="9" height="6.5" fill="#4a80c0" stroke="#ffffff" stroke-width="0.8"/><path d="M5.3 8 H8.5 M5.3 10 H8.5 M5.3 12 H8.5 M5.3 14.5 H18.5" stroke="#6a90c0" stroke-width="0.8"/><rect x="10" y="17.6" width="4" height="3" fill="#111"/><rect x="7.5" y="20.3" width="9" height="2" fill="#222"/></svg>
<div class="a" style="left:877px;top:18px;width:1px;height:33px;background:#a9a9a9"></div><div class="a" style="left:878px;top:18px;width:1px;height:33px;background:#fff"></div>
<div class="a" style="left:882px;top:22px;width:2px;height:2px;background:linear-gradient(135deg,transparent 0 30%,#a8a8a8 30% 100%);border-right:1px solid #fff;border-bottom:1px solid #fff;box-sizing:content-box"></div><div class="a" style="left:882px;top:26px;width:2px;height:2px;background:linear-gradient(135deg,transparent 0 30%,#a8a8a8 30% 100%);border-right:1px solid #fff;border-bottom:1px solid #fff;box-sizing:content-box"></div><div class="a" style="left:882px;top:30px;width:2px;height:2px;background:linear-gradient(135deg,transparent 0 30%,#a8a8a8 30% 100%);border-right:1px solid #fff;border-bottom:1px solid #fff;box-sizing:content-box"></div><div class="a" style="left:882px;top:34px;width:2px;height:2px;background:linear-gradient(135deg,transparent 0 30%,#a8a8a8 30% 100%);border-right:1px solid #fff;border-bottom:1px solid #fff;box-sizing:content-box"></div><div class="a" style="left:882px;top:38px;width:2px;height:2px;background:linear-gradient(135deg,transparent 0 30%,#a8a8a8 30% 100%);border-right:1px solid #fff;border-bottom:1px solid #fff;box-sizing:content-box"></div><div class="a" style="left:882px;top:42px;width:2px;height:2px;background:linear-gradient(135deg,transparent 0 30%,#a8a8a8 30% 100%);border-right:1px solid #fff;border-bottom:1px solid #fff;box-sizing:content-box"></div><div class="a" style="left:882px;top:46px;width:2px;height:2px;background:linear-gradient(135deg,transparent 0 30%,#a8a8a8 30% 100%);border-right:1px solid #fff;border-bottom:1px solid #fff;box-sizing:content-box"></div>
<svg class="a" style="left:891px;top:23px" width="24" height="24" viewBox="0 0 24 24"><path d="M7 10.5 C9 6.5 12.5 5.2 16 5.5 C19.5 6 21.8 8.5 23 11.8 C20.5 10 18 9.2 15.5 9.3 C13 9.5 11.5 10.8 10.5 12.5 Z" fill="#c6c6c6" stroke="#a4a4a4" stroke-width="0.7"/><path d="M1.2 11.5 L11.5 9.2 L7.8 18.7 Z" fill="#cfcfcf" stroke="#a4a4a4" stroke-width="0.7" stroke-linejoin="round"/><path d="M4 12 L9.5 11 L7.5 16" fill="#e6e6e6"/></svg>
<svg class="a" style="left:920px;top:32px" width="9" height="6"><path d="M0.5 0.8 H8 L4.25 4.8 Z" fill="#555"/></svg>
<svg class="a" style="left:934px;top:23px" width="24" height="24" viewBox="0 0 24 24"><g transform="translate(24,0) scale(-1,1)"><path d="M7 10.5 C9 6.5 12.5 5.2 16 5.5 C19.5 6 21.8 8.5 23 11.8 C20.5 10 18 9.2 15.5 9.3 C13 9.5 11.5 10.8 10.5 12.5 Z" fill="#c6c6c6" stroke="#a4a4a4" stroke-width="0.7"/><path d="M1.2 11.5 L11.5 9.2 L7.8 18.7 Z" fill="#cfcfcf" stroke="#a4a4a4" stroke-width="0.7" stroke-linejoin="round"/><path d="M4 12 L9.5 11 L7.5 16" fill="#e6e6e6"/></g></svg>
<div class="a" style="left:4px;top:56px;width:2px;height:2px;background:linear-gradient(135deg,transparent 0 30%,#a8a8a8 30% 100%);border-right:1px solid #fff;border-bottom:1px solid #fff;box-sizing:content-box"></div><div class="a" style="left:4px;top:60px;width:2px;height:2px;background:linear-gradient(135deg,transparent 0 30%,#a8a8a8 30% 100%);border-right:1px solid #fff;border-bottom:1px solid #fff;box-sizing:content-box"></div><div class="a" style="left:4px;top:64px;width:2px;height:2px;background:linear-gradient(135deg,transparent 0 30%,#a8a8a8 30% 100%);border-right:1px solid #fff;border-bottom:1px solid #fff;box-sizing:content-box"></div><div class="a" style="left:4px;top:68px;width:2px;height:2px;background:linear-gradient(135deg,transparent 0 30%,#a8a8a8 30% 100%);border-right:1px solid #fff;border-bottom:1px solid #fff;box-sizing:content-box"></div><div class="a" style="left:4px;top:72px;width:2px;height:2px;background:linear-gradient(135deg,transparent 0 30%,#a8a8a8 30% 100%);border-right:1px solid #fff;border-bottom:1px solid #fff;box-sizing:content-box"></div><div class="a" style="left:4px;top:76px;width:2px;height:2px;background:linear-gradient(135deg,transparent 0 30%,#a8a8a8 30% 100%);border-right:1px solid #fff;border-bottom:1px solid #fff;box-sizing:content-box"></div><div class="a" style="left:4px;top:80px;width:2px;height:2px;background:linear-gradient(135deg,transparent 0 30%,#a8a8a8 30% 100%);border-right:1px solid #fff;border-bottom:1px solid #fff;box-sizing:content-box"></div>
<svg class="a" style="left:13px;top:57px" width="24" height="24" viewBox="0 0 24 24"><path d="M4.9 18.7 L19.1 4.9" stroke="#7a1440" stroke-width="2.2"/><circle cx="4.9" cy="18.7" r="3" fill="#d81e6a" stroke="#8a1a4a" stroke-width="0.7"/><circle cx="19.1" cy="4.9" r="3" fill="#d81e6a" stroke="#8a1a4a" stroke-width="0.7"/></svg>
<svg class="a" style="left:44px;top:57px" width="24" height="24" viewBox="0 0 24 24"><path d="M7.2 8 V19.5 M7.2 12.5 H12 M7.2 19.5 H12" stroke="#333" stroke-width="0.9" fill="none"/><circle cx="7.2" cy="12.5" r="1.1" fill="#fff" stroke="#333" stroke-width="0.7"/><circle cx="7.2" cy="19.5" r="1.1" fill="#fff" stroke="#333" stroke-width="0.7"/><path d="M4.4 2.4 H7.4 L8.4 3.4 H11.9 V7.6 H4.4 Z" fill="#f4cc70" stroke="#c09040" stroke-width="0.6"/><path d="M4.4 4.2 H11.9" stroke="#fce8b0" stroke-width="0.7"/><path d="M12.2 9.8 H15.2 L16.2 10.8 H19.7 V15.0 H12.2 Z" fill="#f4cc70" stroke="#c09040" stroke-width="0.6"/><path d="M12.2 11.600000000000001 H19.7" stroke="#fce8b0" stroke-width="0.7"/><path d="M12.2 16.8 H15.2 L16.2 17.8 H19.7 V22.0 H12.2 Z" fill="#f4cc70" stroke="#c09040" stroke-width="0.6"/><path d="M12.2 18.6 H19.7" stroke="#fce8b0" stroke-width="0.7"/></svg>
<svg class="a" style="left:75px;top:57px" width="24" height="24" viewBox="0 0 24 24"><defs><linearGradient id="fireg" x1="0" y1="0" x2="0" y2="1"><stop offset="0" stop-color="#ffd040"/><stop offset="0.55" stop-color="#ffa010"/><stop offset="1" stop-color="#e85000"/></linearGradient></defs><path d="M1 21 V13 C1.5 10 3 8 3.7 4.3 C5.5 6 7 8.5 7.5 11 C8 12.5 9 12 10 10.5 L11.4 9.5 C13 11 14 12.5 15 14 C16.5 15.5 17.5 15 18.5 14.5 L21.2 14.1 C22.5 15.5 23 17 23 18.5 V21 Z" fill="url(#fireg)"/><path d="M3 21 C3 18 4 16 5 14.5 C6 16.5 7 17.5 8 17 C9 15.5 10.5 14 11.5 15 C12.5 17 13.5 18 15 18 C16.5 17.5 18 17 20 18 C21 19 21.5 20 22 21 Z" fill="#fff060" opacity="0.85"/><path d="M3 21 C4 19.5 5 19 6 19 C6.5 20 7 20.5 7.5 21 Z M11 21 C12 19.5 12.5 19 13 18.5 C13.5 19.5 14 20.5 14.5 21 Z" fill="#e04010" opacity="0.8"/><rect x="1" y="21" width="22" height="1.9" fill="#1a0500"/></svg>
<svg class="a" style="left:106px;top:57px" width="24" height="24" viewBox="0 0 24 24"><path d="M11 1 L21 6 V17 L11 22 L1 17 V6 Z" fill="#c4c4e0" stroke="#5a5a80" stroke-width="1"/><path d="M1 6 L11 11 L21 6 M11 11 V22" stroke="#7a7aa0" stroke-width="0.8" fill="none"/><path d="M1 17 L11 12 L21 17 M11 1 V12" stroke="#9a9ac0" stroke-width="0.5" fill="none" opacity="0.7"/></svg>
<svg class="a" style="left:137px;top:57px" width="24" height="24" viewBox="0 0 24 24"><path d="M6.2 2.7 V11.7 M1.7 7.2 H10.7" stroke="#3a3a80" stroke-width="2"/><path d="M15.5 18 L19.2 12 L23 21.5 C21 23 17.5 23 15.5 21.5 Z" fill="#e02020"/><circle cx="20" cy="11.5" r="3.6" fill="#2020d0"/><circle cx="19" cy="10.5" r="1.3" fill="#8080ff"/><path d="M9 14 L13.5 11.5 L17.5 14 V18.5 L13 21 L9 18.5 Z" fill="#20c020" stroke="#108010" stroke-width="0.5"/><path d="M9 14 L13.5 11.5 L17.5 14 L13 16.5 Z" fill="#70f070"/></svg>
<svg class="a" style="left:168px;top:57px" width="24" height="24" viewBox="0 0 24 24"><path d="M3 2 V20.8 H22" stroke="#000" stroke-width="2" fill="none"/><path d="M5.3 20 C5.3 13 5.5 9 7.5 6.5 C9.5 4 12 3 14.5 3 C17.5 3 20 4.8 21.3 7.5" stroke="#e02020" stroke-width="1.3" fill="none"/><path d="M10 5.5 H17 V10.5 H14.5 V15 H17 V19.8 H10 V15 H12.5 V10.5 H10 Z" fill="#d4d4d4" stroke="#444" stroke-width="0.9"/><path d="M11.2 7 H15.8 M11.2 17 H15.8" stroke="#f4f4f4" stroke-width="1.2"/></svg>
<svg class="a" style="left:199px;top:57px" width="24" height="24" viewBox="0 0 24 24"><path d="M1 2 H6 L7 3 H15 V15 H1 Z" fill="#f6d878" stroke="#c8a040" stroke-width="0.6"/><text x="4" y="10" font-family="Liberation Sans" font-weight="bold" font-size="8" fill="#111">t</text><path d="M2.5 12 L4 13.5 L1 13.5 Z M2.5 19 L4 17.5 L1 17.5 Z" fill="#c02020"/><path d="M2.5 13.5 V17.5" stroke="#c02020" stroke-width="0.6"/><path d="M7 16 L14 11.5 L22 15 V18.5 L15 22.5 L7 19 Z" fill="#707070" stroke="#404040" stroke-width="0.6"/><path d="M7 16 L14 11.5 L22 15 L15 19 Z" fill="#c8c8c8"/></svg>
<svg class="a" style="left:230px;top:57px" width="24" height="24" viewBox="0 0 24 24"><path d="M3 21.2 L6.8 6.6 C8 2 12 1.5 16 2 C21 2.5 23 6 22.5 10 C22 14 17 17 13 17" stroke="#1010d0" stroke-width="1.6" fill="none"/><circle cx="3" cy="21" r="1.8" fill="#e01818"/><circle cx="6.8" cy="6.6" r="1.8" fill="#e01818"/><circle cx="13" cy="17" r="1.8" fill="#e01818"/><circle cx="15.1" cy="6.6" r="1.7" fill="#f0a0a0"/><circle cx="21" cy="20.8" r="1.7" fill="#f0a0a0"/></svg>
<svg class="a" style="left:259px;top:57px" width="24" height="24" viewBox="0 0 24 24"><path d="M18.3 12 V9.5 H7 L13 15.8 L6.5 21.8 H18.8 V19" fill="none" stroke="#111" stroke-width="1.9" stroke-linejoin="miter"/><circle cx="7.8" cy="5.4" r="5" fill="#2a2aa8"/><rect x="7" y="4.6" width="1.8" height="4.4" fill="#fff"/><circle cx="7.9" cy="2.9" r="1" fill="#fff"/></svg>
<svg class="a" style="left:291px;top:57px" width="24" height="24" viewBox="0 0 24 24"><g fill="#c8c8c8" stroke="#8a8a8a" stroke-width="0.6"><path d="M22.5 1 C23.5 2 22 4.5 20 6.5 L6 20.5 C5 21.5 4 21.5 3.5 21 C3 20.5 3.5 19.5 4.5 18.5 L18.5 4.5 C20.5 2.5 21.5 0.5 22.5 1 Z"/><path d="M12 10.5 L1.5 5.5 L3 4.5 L15 7.5 Z"/><path d="M14 12.5 L19 23 L20 21.5 L17 9.5 Z"/><path d="M6 18 L1 16.5 L2 15.5 L7 16 Z"/><path d="M6.5 18.5 L8 23 L9 22 L8.5 17 Z"/></g></svg>
<svg class="a" style="left:322px;top:57px" width="24" height="24" viewBox="0 0 24 24"><text x="1.5" y="9.6" font-family="Liberation Sans" font-size="10.5" fill="#40b040">G</text><path d="M11 9.5 L6.8 12.5 L11 15.5 M15.5 9.5 L19.8 12.5 L15.5 15.5" stroke="#111" stroke-width="2" fill="none"/><text x="18.3" y="23" font-family="Liberation Sans" font-size="11" fill="#5050a0">L</text></svg>
<div class="a" style="left:352px;top:53px;width:1px;height:32px;background:#a9a9a9"></div><div class="a" style="left:353px;top:53px;width:1px;height:32px;background:#fff"></div>
<div class="a" style="left:357px;top:56px;width:2px;height:2px;background:linear-gradient(135deg,transparent 0 30%,#a8a8a8 30% 100%);border-right:1px solid #fff;border-bottom:1px solid #fff;box-sizing:content-box"></div><div class="a" style="left:357px;top:60px;width:2px;height:2px;background:linear-gradient(135deg,transparent 0 30%,#a8a8a8 30% 100%);border-right:1px solid #fff;border-bottom:1px solid #fff;box-sizing:content-box"></div><div class="a" style="left:357px;top:64px;width:2px;height:2px;background:linear-gradient(135deg,transparent 0 30%,#a8a8a8 30% 100%);border-right:1px solid #fff;border-bottom:1px solid #fff;box-sizing:content-box"></div><div class="a" style="left:357px;top:68px;width:2px;height:2px;background:linear-gradient(135deg,transparent 0 30%,#a8a8a8 30% 100%);border-right:1px solid #fff;border-bottom:1px solid #fff;box-sizing:content-box"></div><div class="a" style="left:357px;top:72px;width:2px;height:2px;background:linear-gradient(135deg,transparent 0 30%,#a8a8a8 30% 100%);border-right:1px solid #fff;border-bottom:1px solid #fff;box-sizing:content-box"></div><div class="a" style="left:357px;top:76px;width:2px;height:2px;background:linear-gradient(135deg,transparent 0 30%,#a8a8a8 30% 100%);border-right:1px solid #fff;border-bottom:1px solid #fff;box-sizing:content-box"></div><div class="a" style="left:357px;top:80px;width:2px;height:2px;background:linear-gradient(135deg,transparent 0 30%,#a8a8a8 30% 100%);border-right:1px solid #fff;border-bottom:1px solid #fff;box-sizing:content-box"></div>
<svg class="a" style="left:366px;top:57px" width="24" height="24" viewBox="0 0 24 24"><defs><linearGradient id="cbar" x1="0" x2="1"><stop offset="0" stop-color="#0010c0"/><stop offset="0.3" stop-color="#0060ff"/><stop offset="0.45" stop-color="#00e0ff"/><stop offset="0.62" stop-color="#20c020"/><stop offset="0.8" stop-color="#f0f000"/><stop offset="1" stop-color="#ff6000"/></linearGradient></defs><path d="M3.7 7.2 C8 6.5 14 5 20.5 2.1 V16.5 C14 19.5 8 20.5 3.7 20.7 Z" fill="url(#cbar)" stroke="#404060" stroke-width="0.4"/></svg>
<svg class="a" style="left:397px;top:57px" width="24" height="24" viewBox="0 0 24 24"><path d="M1.5 10 H10 L12.5 12.5 V22.5 H1.5 Z" fill="#fff" stroke="#333" stroke-width="0.9"/><path d="M3 13.5 H6 M7 13.5 H10.5 M3 16 H6 M7 16 H10.5 M3 18.5 H6 M7 18.5 H10.5 M3 21 H6 M7 21 H10.5" stroke="#222" stroke-width="1.1"/><path d="M1 6 C5 1 8.5 2 11 5 C14 9 16 12 22 9.5" stroke="#e02020" stroke-width="1.6" fill="none"/><path d="M10.5 14 C14 10 17 5 22.5 1" stroke="#2020d0" stroke-width="1.5" fill="none"/></svg>
<svg class="a" style="left:428px;top:57px" width="24" height="24" viewBox="0 0 24 24"><clipPath id="ec1"><path d="M1.3000000000000007 7.5 Q11.8 -4.5 22.3 7.5 Q11.8 19.5 1.3000000000000007 7.5 Z"/></clipPath><path d="M1.3000000000000007 7.5 Q11.8 -4.5 22.3 7.5 Q11.8 19.5 1.3000000000000007 7.5 Z" fill="#fff"/><g clip-path="url(#ec1)"><circle cx="11.8" cy="7.3" r="5.7" fill="#7e9ad6"/><circle cx="11.8" cy="8.4" r="3.3" fill="#b4c6f0" opacity="0.85"/><circle cx="11.8" cy="4.8" r="1.3" fill="#111"/></g><path d="M1.3000000000000007 7.5 Q11.8 -4.5 22.3 7.5 Q11.8 19.5 1.3000000000000007 7.5 Z" fill="none" stroke="#7a7a7a" stroke-width="1.7"/><text x="15.2" y="21.8" font-family="Liberation Sans" font-weight="bold" font-size="9" fill="#333">1</text></svg>
<svg class="a" style="left:459px;top:57px" width="24" height="24" viewBox="0 0 24 24"><path d="M1 8 H17 V22.5 H1 Z" fill="#fff" stroke="#777" stroke-width="0.9"/><path d="M9 8 V22.5" stroke="#777" stroke-width="0.8"/><path d="M3 12 H7 M3 14.5 H7 M3 17 H7 M3 19.5 H7" stroke="#777" stroke-width="0.9"/><rect x="10.5" y="13" width="5" height="5" fill="none" stroke="#777" stroke-width="0.8"/><ellipse cx="14.1" cy="6.7" rx="8" ry="5.6" fill="#b4b4b4" stroke="#888" stroke-width="0.8"/><path d="M11 11.5 L10 14 L14 12" fill="#b4b4b4"/><text x="14.1" y="10.5" text-anchor="middle" font-family="Liberation Sans" font-weight="bold" font-size="11" fill="#2020b0">?</text></svg>
<svg class="a" style="left:490px;top:57px" width="24" height="24" viewBox="0 0 24 24"><g fill="#a8a8a8" stroke="#9a9a9a" stroke-width="0.5"><path d="M4.2 12 C4.2 6.5 8.5 3.6 12.5 3.6 C14.8 3.6 16.5 4.5 17.5 5.5 L19.3 3.6 V11 H12 L14.5 8.5 C13.5 7.8 12.8 7.6 12 7.6 C9.8 7.6 8.2 9.5 8.2 12 Z"/><path d="M18.8 13 C18.8 18.5 14.5 21.7 10.5 21.7 C8.2 21.7 6.5 20.8 5.5 19.8 L3.7 21.7 V14.3 H11 L8.5 16.8 C9.5 17.5 10.2 17.7 11 17.7 C13.2 17.7 14.8 15.8 14.8 13 Z"/></g></svg>
<svg class="a" style="left:521px;top:57px" width="24" height="24" viewBox="0 0 24 24"><rect x="4" y="3" width="18.5" height="10.5" rx="2" fill="#7a7ab0" stroke="#4a4a80" stroke-width="0.7"/><rect x="7" y="1.3" width="6" height="2.5" rx="1" fill="#8a8ac0"/><circle cx="16.5" cy="8.8" r="4" fill="#5a5a90" stroke="#ccccf0" stroke-width="0.8"/><circle cx="16.5" cy="8.8" r="2.2" fill="#b8b8f0"/><rect x="1" y="10.2" width="11.5" height="12.4" rx="0.8" fill="#3a3a80"/><rect x="3" y="11" width="7.5" height="5" fill="#e8e8f8"/><rect x="4" y="18" width="5" height="4.6" fill="#c8c8e8"/><rect x="5" y="19" width="1.3" height="3" fill="#2a2a60"/></svg>
<div class="a" style="left:550px;top:53px;width:1px;height:32px;background:#a9a9a9"></div><div class="a" style="left:551px;top:53px;width:1px;height:32px;background:#fff"></div>
<div class="a" style="left:555px;top:56px;width:2px;height:2px;background:linear-gradient(135deg,transparent 0 30%,#a8a8a8 30% 100%);border-right:1px solid #fff;border-bottom:1px solid #fff;box-sizing:content-box"></div><div class="a" style="left:555px;top:60px;width:2px;height:2px;background:linear-gradient(135deg,transparent 0 30%,#a8a8a8 30% 100%);border-right:1px solid #fff;border-bottom:1px solid #fff;box-sizing:content-box"></div><div class="a" style="left:555px;top:64px;width:2px;height:2px;background:linear-gradient(135deg,transparent 0 30%,#a8a8a8 30% 100%);border-right:1px solid #fff;border-bottom:1px solid #fff;box-sizing:content-box"></div><div class="a" style="left:555px;top:68px;width:2px;height:2px;background:linear-gradient(135deg,transparent 0 30%,#a8a8a8 30% 100%);border-right:1px solid #fff;border-bottom:1px solid #fff;box-sizing:content-box"></div><div class="a" style="left:555px;top:72px;width:2px;height:2px;background:linear-gradient(135deg,transparent 0 30%,#a8a8a8 30% 100%);border-right:1px solid #fff;border-bottom:1px solid #fff;box-sizing:content-box"></div><div class="a" style="left:555px;top:76px;width:2px;height:2px;background:linear-gradient(135deg,transparent 0 30%,#a8a8a8 30% 100%);border-right:1px solid #fff;border-bottom:1px solid #fff;box-sizing:content-box"></div><div class="a" style="left:555px;top:80px;width:2px;height:2px;background:linear-gradient(135deg,transparent 0 30%,#a8a8a8 30% 100%);border-right:1px solid #fff;border-bottom:1px solid #fff;box-sizing:content-box"></div>
<svg class="a" style="left:564px;top:57px" width="24" height="24" viewBox="0 0 24 24"><path d="M2 12.1 L6.5 8.5 L10.5 13 L19 4.5 L22.6 8 L10.5 20 Z" fill="#c4cc50" stroke="#8a9a30" stroke-width="0.8"/></svg>
<svg class="a" style="left:595px;top:57px" width="24" height="24" viewBox="0 0 24 24"><rect x="7.5" y="2" width="14" height="20.3" rx="1.2" fill="#5a5a88" stroke="#3a3a68" stroke-width="0.6"/><rect x="9.3" y="3.7" width="10.5" height="3.5" fill="#fff"/><rect x="9.3" y="8.8" width="2.6" height="2.3" fill="#f4f4ff"/><rect x="9.3" y="12.1" width="2.6" height="2.3" fill="#f4f4ff"/><rect x="9.3" y="15.4" width="2.6" height="2.3" fill="#f4f4ff"/><rect x="9.3" y="18.7" width="2.6" height="2.3" fill="#f4f4ff"/><rect x="13.0" y="8.8" width="2.6" height="2.3" fill="#f4f4ff"/><rect x="13.0" y="12.1" width="2.6" height="2.3" fill="#f4f4ff"/><rect x="13.0" y="15.4" width="2.6" height="2.3" fill="#f4f4ff"/><rect x="13.0" y="18.7" width="2.6" height="2.3" fill="#f4f4ff"/><rect x="16.7" y="8.8" width="2.6" height="2.3" fill="#f4f4ff"/><rect x="16.7" y="12.1" width="2.6" height="2.3" fill="#f4f4ff"/><rect x="16.7" y="15.4" width="2.6" height="2.3" fill="#f4f4ff"/><rect x="16.7" y="18.7" width="2.6" height="2.3" fill="#f4f4ff"/><circle cx="6" cy="6" r="4.5" fill="#2a2aa8" stroke="#fff" stroke-width="0.5"/><text x="6" y="9.3" text-anchor="middle" font-family="Liberation Sans" font-weight="bold" font-size="8" fill="#fff">i</text></svg>
<svg class="a" style="left:626px;top:57px" width="24" height="24" viewBox="0 0 24 24"><rect x="2.5" y="5" width="19.5" height="13.5" fill="#fff" stroke="#111" stroke-width="1.8"/><text x="12.2" y="15.3" text-anchor="middle" font-family="Liberation Sans" font-size="9" fill="#333" letter-spacing="-0.3">INIT</text></svg>
<svg class="a" style="left:657px;top:57px" width="24" height="24" viewBox="0 0 24 24"><defs><radialGradient id="rung" cx="0.4" cy="0.35" r="0.7"><stop offset="0" stop-color="#9aff6a"/><stop offset="0.6" stop-color="#30d020"/><stop offset="1" stop-color="#108a10"/></radialGradient></defs><circle cx="12.2" cy="12.1" r="10.8" fill="url(#rung)" stroke="#1a7a1a" stroke-width="0.6"/><text x="12.2" y="15" text-anchor="middle" font-family="Liberation Sans" font-weight="bold" font-size="7.5" fill="#1a4a10" letter-spacing="-0.2">RUN</text></svg>
<div class="a" style="left:686px;top:53px;width:1px;height:32px;background:#a9a9a9"></div><div class="a" style="left:687px;top:53px;width:1px;height:32px;background:#fff"></div>
<div class="a" style="left:691px;top:56px;width:2px;height:2px;background:linear-gradient(135deg,transparent 0 30%,#a8a8a8 30% 100%);border-right:1px solid #fff;border-bottom:1px solid #fff;box-sizing:content-box"></div><div class="a" style="left:691px;top:60px;width:2px;height:2px;background:linear-gradient(135deg,transparent 0 30%,#a8a8a8 30% 100%);border-right:1px solid #fff;border-bottom:1px solid #fff;box-sizing:content-box"></div><div class="a" style="left:691px;top:64px;width:2px;height:2px;background:linear-gradient(135deg,transparent 0 30%,#a8a8a8 30% 100%);border-right:1px solid #fff;border-bottom:1px solid #fff;box-sizing:content-box"></div><div class="a" style="left:691px;top:68px;width:2px;height:2px;background:linear-gradient(135deg,transparent 0 30%,#a8a8a8 30% 100%);border-right:1px solid #fff;border-bottom:1px solid #fff;box-sizing:content-box"></div><div class="a" style="left:691px;top:72px;width:2px;height:2px;background:linear-gradient(135deg,transparent 0 30%,#a8a8a8 30% 100%);border-right:1px solid #fff;border-bottom:1px solid #fff;box-sizing:content-box"></div><div class="a" style="left:691px;top:76px;width:2px;height:2px;background:linear-gradient(135deg,transparent 0 30%,#a8a8a8 30% 100%);border-right:1px solid #fff;border-bottom:1px solid #fff;box-sizing:content-box"></div><div class="a" style="left:691px;top:80px;width:2px;height:2px;background:linear-gradient(135deg,transparent 0 30%,#a8a8a8 30% 100%);border-right:1px solid #fff;border-bottom:1px solid #fff;box-sizing:content-box"></div>
<svg class="a" style="left:700px;top:57px" width="24" height="24" viewBox="0 0 24 24"><rect x="3.7" y="7" width="3" height="12.9" fill="#2020d0"/><rect x="7.3" y="3.3" width="3" height="16.6" fill="#f0e020"/><rect x="10.9" y="5" width="3" height="14.9" fill="#20b020"/><rect x="14.5" y="8" width="3" height="11.9" fill="#20c8f0"/><path d="M3 18.5 C6 13 9 10 12 11 C14.5 12 16 17 20.5 17" stroke="#d02020" stroke-width="1.5" fill="none"/></svg>
<svg class="a" style="left:731px;top:57px" width="24" height="24" viewBox="0 0 24 24"><rect x="1.5" y="2.5" width="21.2" height="19.3" rx="1" fill="#fff" stroke="#555" stroke-width="1"/><rect x="1.5" y="2.5" width="21.2" height="3.5" fill="#555"/><path d="M12 6 V21.8" stroke="#777" stroke-width="0.8"/><path d="M4 9 H10 V19 H4 Z" fill="none" stroke="#777" stroke-width="0.8"/><path d="M5 11.5 H9 M5 14 H9 M5 16.5 H9 M14 9 H20.5 M14 11.5 H20.5 M14 14 H20.5 M14 16.5 H20.5 M14 19 H20.5" stroke="#777" stroke-width="0.9"/></svg>
<div class="a" style="left:760px;top:53px;width:1px;height:32px;background:#a9a9a9"></div><div class="a" style="left:761px;top:53px;width:1px;height:32px;background:#fff"></div>
<div class="a" style="left:765px;top:56px;width:2px;height:2px;background:linear-gradient(135deg,transparent 0 30%,#a8a8a8 30% 100%);border-right:1px solid #fff;border-bottom:1px solid #fff;box-sizing:content-box"></div><div class="a" style="left:765px;top:60px;width:2px;height:2px;background:linear-gradient(135deg,transparent 0 30%,#a8a8a8 30% 100%);border-right:1px solid #fff;border-bottom:1px solid #fff;box-sizing:content-box"></div><div class="a" style="left:765px;top:64px;width:2px;height:2px;background:linear-gradient(135deg,transparent 0 30%,#a8a8a8 30% 100%);border-right:1px solid #fff;border-bottom:1px solid #fff;box-sizing:content-box"></div><div class="a" style="left:765px;top:68px;width:2px;height:2px;background:linear-gradient(135deg,transparent 0 30%,#a8a8a8 30% 100%);border-right:1px solid #fff;border-bottom:1px solid #fff;box-sizing:content-box"></div><div class="a" style="left:765px;top:72px;width:2px;height:2px;background:linear-gradient(135deg,transparent 0 30%,#a8a8a8 30% 100%);border-right:1px solid #fff;border-bottom:1px solid #fff;box-sizing:content-box"></div><div class="a" style="left:765px;top:76px;width:2px;height:2px;background:linear-gradient(135deg,transparent 0 30%,#a8a8a8 30% 100%);border-right:1px solid #fff;border-bottom:1px solid #fff;box-sizing:content-box"></div><div class="a" style="left:765px;top:80px;width:2px;height:2px;background:linear-gradient(135deg,transparent 0 30%,#a8a8a8 30% 100%);border-right:1px solid #fff;border-bottom:1px solid #fff;box-sizing:content-box"></div>
<svg class="a" style="left:773px;top:57px" width="24" height="24" viewBox="0 0 24 24"><path d="M5.7 18.3 L19.9 4.9" stroke="#5a5a80" stroke-width="2"/><circle cx="5.7" cy="18.3" r="3.1" fill="#6a6a98" stroke="#4a4a70" stroke-width="0.5"/><circle cx="4.8" cy="17.4" r="1.4" fill="#a8a8d0" opacity="0.8"/><circle cx="12.8" cy="12" r="3.1" fill="#6a6a98" stroke="#4a4a70" stroke-width="0.5"/><circle cx="11.9" cy="11.1" r="1.4" fill="#a8a8d0" opacity="0.8"/><circle cx="19.9" cy="4.9" r="3.1" fill="#6a6a98" stroke="#4a4a70" stroke-width="0.5"/><circle cx="19.0" cy="4.0" r="1.4" fill="#a8a8d0" opacity="0.8"/></svg>
<svg class="a" style="left:806px;top:57px" width="24" height="24" viewBox="0 0 24 24"><g font-family="Liberation Sans" font-weight="bold" font-size="9.5" fill="#505050" text-anchor="middle"><text x="14" y="9">2</text><text x="13.5" y="16">1</text><text x="13.5" y="23">3</text></g><path d="M8.5 7 C6.5 7 5 8 4.5 10" stroke="#e02020" stroke-width="1.4" fill="none"/><path d="M2.5 9 L6.5 9.3 L4.3 12.5 Z" fill="#e02020"/><path d="M16.5 13 C18.5 13 19.5 12 20 10" stroke="#e02020" stroke-width="1.4" fill="none"/><path d="M22 11 L18 10.7 L20.2 7.5 Z" fill="#e02020"/></svg>
<svg class="a" style="left:836px;top:57px" width="24" height="24" viewBox="0 0 24 24"><circle cx="4.6" cy="17.5" r="3.4" fill="#e0e020" stroke="#a0a010" stroke-width="0.5"/><circle cx="3.6" cy="16.5" r="1.5" fill="#ffff90" opacity="0.8"/><circle cx="19.2" cy="7.3" r="3.4" fill="#e0e020" stroke="#a0a010" stroke-width="0.5"/><circle cx="18.2" cy="6.3" r="1.5" fill="#ffff90" opacity="0.8"/><path d="M9 14 L15 10" stroke="#222" stroke-width="1.3"/><path d="M7.5 15.3 L9 11.8 L11 14.8 Z M16.5 8.7 L15 12.2 L13 9.2 Z" fill="#222"/></svg>
<div class="a" style="left:865px;top:53px;width:1px;height:32px;background:#a9a9a9"></div><div class="a" style="left:866px;top:53px;width:1px;height:32px;background:#fff"></div>
<div class="a" style="left:870px;top:56px;width:2px;height:2px;background:linear-gradient(135deg,transparent 0 30%,#a8a8a8 30% 100%);border-right:1px solid #fff;border-bottom:1px solid #fff;box-sizing:content-box"></div><div class="a" style="left:870px;top:60px;width:2px;height:2px;background:linear-gradient(135deg,transparent 0 30%,#a8a8a8 30% 100%);border-right:1px solid #fff;border-bottom:1px solid #fff;box-sizing:content-box"></div><div class="a" style="left:870px;top:64px;width:2px;height:2px;background:linear-gradient(135deg,transparent 0 30%,#a8a8a8 30% 100%);border-right:1px solid #fff;border-bottom:1px solid #fff;box-sizing:content-box"></div><div class="a" style="left:870px;top:68px;width:2px;height:2px;background:linear-gradient(135deg,transparent 0 30%,#a8a8a8 30% 100%);border-right:1px solid #fff;border-bottom:1px solid #fff;box-sizing:content-box"></div><div class="a" style="left:870px;top:72px;width:2px;height:2px;background:linear-gradient(135deg,transparent 0 30%,#a8a8a8 30% 100%);border-right:1px solid #fff;border-bottom:1px solid #fff;box-sizing:content-box"></div><div class="a" style="left:870px;top:76px;width:2px;height:2px;background:linear-gradient(135deg,transparent 0 30%,#a8a8a8 30% 100%);border-right:1px solid #fff;border-bottom:1px solid #fff;box-sizing:content-box"></div><div class="a" style="left:870px;top:80px;width:2px;height:2px;background:linear-gradient(135deg,transparent 0 30%,#a8a8a8 30% 100%);border-right:1px solid #fff;border-bottom:1px solid #fff;box-sizing:content-box"></div>
<div class="a" style="left:876px;top:55px;width:31px;height:28px;border:1px solid #6a6a6a;border-radius:3px;background:linear-gradient(#e8e8e8,#dcdcdc)"></div>
<svg class="a" style="left:880px;top:59px" width="24" height="15"><clipPath id="ec2"><path d="M0.9000000000000004 6.5 Q11.5 -4.300000000000001 22.1 6.5 Q11.5 17.3 0.9000000000000004 6.5 Z"/></clipPath><path d="M0.9000000000000004 6.5 Q11.5 -4.300000000000001 22.1 6.5 Q11.5 17.3 0.9000000000000004 6.5 Z" fill="#fff"/><g clip-path="url(#ec2)"><circle cx="11.5" cy="6.3" r="5.1" fill="#7e9ad6"/><circle cx="11.5" cy="7.4" r="3.0" fill="#b4c6f0" opacity="0.85"/><circle cx="11.5" cy="4.1" r="1.3" fill="#111"/></g><path d="M0.9000000000000004 6.5 Q11.5 -4.300000000000001 22.1 6.5 Q11.5 17.3 0.9000000000000004 6.5 Z" fill="none" stroke="#7a7a7a" stroke-width="1.7"/></svg>
<div class="a" style="left:907px;top:55px;width:31px;height:28px;border:1px solid #6a6a6a;border-radius:3px;background:linear-gradient(#e8e8e8,#dcdcdc)"></div>
<svg class="a" style="left:911px;top:59px" width="24" height="15"><clipPath id="ec3"><path d="M0.9000000000000004 6.5 Q11.5 -4.300000000000001 22.1 6.5 Q11.5 17.3 0.9000000000000004 6.5 Z"/></clipPath><path d="M0.9000000000000004 6.5 Q11.5 -4.300000000000001 22.1 6.5 Q11.5 17.3 0.9000000000000004 6.5 Z" fill="#fff"/><g clip-path="url(#ec3)"><circle cx="11.5" cy="6.3" r="5.1" fill="#7e9ad6"/><circle cx="11.5" cy="7.4" r="3.0" fill="#b4c6f0" opacity="0.85"/><circle cx="11.5" cy="4.1" r="1.3" fill="#111"/></g><path d="M0.9000000000000004 6.5 Q11.5 -4.300000000000001 22.1 6.5 Q11.5 17.3 0.9000000000000004 6.5 Z" fill="none" stroke="#7a7a7a" stroke-width="1.7"/></svg>
<div class="a" style="left:938px;top:55px;width:31px;height:28px;border:1px solid #6a6a6a;border-radius:3px;background:linear-gradient(#e8e8e8,#dcdcdc)"></div>
<svg class="a" style="left:942px;top:59px" width="24" height="15"><clipPath id="ec4"><path d="M0.9000000000000004 6.5 Q11.5 -4.300000000000001 22.1 6.5 Q11.5 17.3 0.9000000000000004 6.5 Z"/></clipPath><path d="M0.9000000000000004 6.5 Q11.5 -4.300000000000001 22.1 6.5 Q11.5 17.3 0.9000000000000004 6.5 Z" fill="#fff"/><g clip-path="url(#ec4)"><circle cx="11.5" cy="6.3" r="5.1" fill="#7e9ad6"/><circle cx="11.5" cy="7.4" r="3.0" fill="#b4c6f0" opacity="0.85"/><circle cx="11.5" cy="4.1" r="1.3" fill="#111"/></g><path d="M0.9000000000000004 6.5 Q11.5 -4.300000000000001 22.1 6.5 Q11.5 17.3 0.9000000000000004 6.5 Z" fill="none" stroke="#7a7a7a" stroke-width="1.7"/></svg>
<div class="a" style="left:969px;top:55px;width:31px;height:28px;border:1px solid #6a6a6a;border-radius:3px;background:linear-gradient(#e8e8e8,#dcdcdc)"></div>
<svg class="a" style="left:973px;top:59px" width="24" height="15"><clipPath id="ec5"><path d="M0.9000000000000004 6.5 Q11.5 -4.300000000000001 22.1 6.5 Q11.5 17.3 0.9000000000000004 6.5 Z"/></clipPath><path d="M0.9000000000000004 6.5 Q11.5 -4.300000000000001 22.1 6.5 Q11.5 17.3 0.9000000000000004 6.5 Z" fill="#fff"/><g clip-path="url(#ec5)"><circle cx="11.5" cy="6.3" r="5.1" fill="#7e9ad6"/><circle cx="11.5" cy="7.4" r="3.0" fill="#b4c6f0" opacity="0.85"/><circle cx="11.5" cy="4.1" r="1.3" fill="#111"/></g><path d="M0.9000000000000004 6.5 Q11.5 -4.300000000000001 22.1 6.5 Q11.5 17.3 0.9000000000000004 6.5 Z" fill="none" stroke="#7a7a7a" stroke-width="1.7"/></svg>
<div class="a" style="left:1000px;top:55px;width:31px;height:28px;border:1px solid #6a6a6a;border-radius:3px;background:linear-gradient(#e8e8e8,#dcdcdc)"></div>
<svg class="a" style="left:1004px;top:59px" width="24" height="15"><clipPath id="ec6"><path d="M0.9000000000000004 6.5 Q11.5 -4.300000000000001 22.1 6.5 Q11.5 17.3 0.9000000000000004 6.5 Z"/></clipPath><path d="M0.9000000000000004 6.5 Q11.5 -4.300000000000001 22.1 6.5 Q11.5 17.3 0.9000000000000004 6.5 Z" fill="#fff"/><g clip-path="url(#ec6)"><circle cx="11.5" cy="6.3" r="5.1" fill="#7e9ad6"/><circle cx="11.5" cy="7.4" r="3.0" fill="#b4c6f0" opacity="0.85"/><circle cx="11.5" cy="4.1" r="1.3" fill="#111"/></g><path d="M0.9000000000000004 6.5 Q11.5 -4.300000000000001 22.1 6.5 Q11.5 17.3 0.9000000000000004 6.5 Z" fill="none" stroke="#7a7a7a" stroke-width="1.7"/></svg>
<svg class="a" style="left:876px;top:55px" width="31" height="28"><text x="10.5" y="24.8" font-family="Liberation Sans" font-weight="bold" font-size="9" fill="#444">123</text></svg>
<svg class="a" style="left:907px;top:55px" width="31" height="28"><text x="20" y="25" font-family="Liberation Sans" font-size="10" fill="#111">E</text></svg>
<svg class="a" style="left:938px;top:55px" width="31" height="28"><text x="19.5" y="25" font-family="Liberation Sans" font-size="10" fill="#111">T</text></svg>
<svg class="a" style="left:969px;top:55px" width="31" height="28"><text x="18.5" y="25" font-family="Liberation Sans" font-size="10" fill="#111">C</text></svg>
<svg class="a" style="left:1000px;top:55px" width="31" height="28"><path d="M8 21.3 H13 M10.5 18.8 V23.8 M17 19 L15.3 24 M19 21.5 H23.5" stroke="#333" stroke-width="1.6"/></svg>
<svg class="a" style="left:1033px;top:57px" width="24" height="24" viewBox="0 0 24 24"><path d="M3 11 C3 6 8 3.5 12 4 L19 7.5 C22 9 22.5 13 20.5 15 L15 20.5 C12 22 8 20 6 18 Z" fill="#8a8ad0" stroke="#6a6ab0" stroke-width="0.5"/><path d="M14 10 L17.5 20.5 L19 18 L21.5 21 L22.5 20 L20 17.3 L23 16.5 Z" fill="#fff" stroke="#333" stroke-width="0.6"/></svg>
<div class="a" style="left:1062px;top:55px;width:31px;height:28px;border:1px solid #6a6a6a;border-radius:3px;background:linear-gradient(#e8e8e8,#dcdcdc)"></div>
<svg class="a" style="left:1066px;top:58px" width="11" height="24"><clipPath id="ec7"><path d="M1.1999999999999993 6.6 Q11.5 -4.6 21.8 6.6 Q11.5 17.799999999999997 1.1999999999999993 6.6 Z"/></clipPath><path d="M1.1999999999999993 6.6 Q11.5 -4.6 21.8 6.6 Q11.5 17.799999999999997 1.1999999999999993 6.6 Z" fill="#fff"/><g clip-path="url(#ec7)"><circle cx="11.5" cy="6.3999999999999995" r="5.3" fill="#7e9ad6"/><circle cx="11.5" cy="7.5" r="3.1" fill="#b4c6f0" opacity="0.85"/><circle cx="11.5" cy="4.1" r="1.3" fill="#111"/></g><path d="M1.1999999999999993 6.6 Q11.5 -4.6 21.8 6.6 Q11.5 17.799999999999997 1.1999999999999993 6.6 Z" fill="none" stroke="#7a7a7a" stroke-width="1.7"/><path d="M3 22 C4 15 9 14 12 16" fill="#8a8ad0" stroke="#6a6ab0" stroke-width="0.5"/></svg>
<!-- /toolbar -->
<!-- main area -->
<!-- left tabs -->
<div class="a" style="left:20px;top:86px;width:1px;height:654px;background:#a0a0a0"></div>
<div class="tab a" style="top:88px;height:117px"></div>
<div class="tab a" style="top:204px;height:114px"></div>
<div class="tab a" style="top:317px;height:135px"></div>
<div class="tab sel a" style="top:451px;height:101px"></div>
<div class="tab a" style="top:551px;height:89px"></div>
<div class="tab a" style="top:639px;height:82px"></div>
<span class="rt" style="left:6.7px;top:194.2px;transform:rotate(-90deg) scaleX(0.945)">Flow Model Browser</span>
<span class="rt" style="left:6.7px;top:311.6px;transform:rotate(-90deg) scaleX(1.018)">Geometry Browser</span>
<span class="rt" style="left:6.7px;top:441.4px;transform:rotate(-90deg) scaleX(0.94)">Thermal Model Browser</span>
<span class="rt" style="left:5.9px;top:539.3px;transform:rotate(-90deg) scaleX(0.974)">Element Library</span>
<span class="rt" style="left:6.7px;top:628.8px;transform:rotate(-90deg) scaleX(0.932)">Datum Planes</span>
<span class="rt" style="left:6.7px;top:712.9px;transform:rotate(-90deg) scaleX(0.945)">Saved Views</span>
<!-- dock -->
<div class="a" style="left:21px;top:87px;width:352px;height:19px;background:#dadada;border-top:1px solid #b4b4b4;border-bottom:1px solid #bcbcc4"></div>
<span class="t" style="left:25px;top:93px;font-size:11px;transform:scaleX(0.952);transform-origin:0 0">Element Library</span>
<!-- tree frame -->
<div class="a" style="left:21px;top:108px;width:352px;height:632px;background:#fff;border:1px solid #a0a0a0;border-bottom:none"></div>
<!-- tree -->
<div class="a" style="left:42px;top:109px;width:313px;height:17px;background:repeating-conic-gradient(#88bb70 0 25%,#f0f8e6 0 50%) 0 0/2px 2px"></div>
<svg class="a" style="left:30px;top:113px" width="7" height="7"><path d="M0.5 6.5 L6.5 6.5 L6.5 0.5 Z" fill="#404040" stroke="#262626" stroke-width="1" stroke-linejoin="round"/></svg>
<span class="t" style="left:45px;top:112px;font-weight:bold;transform:scaleX(0.931);transform-origin:0 0">FLOW</span>
<svg class="a" style="left:50px;top:130px" width="7" height="7"><path d="M0.5 6.5 L6.5 6.5 L6.5 0.5 Z" fill="#404040" stroke="#262626" stroke-width="1" stroke-linejoin="round"/></svg>
<span class="t" style="left:65px;top:129px;transform:scaleX(0.98);transform-origin:0 0">Chambers</span>
<svg class="a" style="left:70px;top:147px" width="7" height="7"><path d="M0.5 6.5 L6.5 6.5 L6.5 0.5 Z" fill="#404040" stroke="#262626" stroke-width="1" stroke-linejoin="round"/></svg>
<span class="t" style="left:85px;top:146px">Boundary</span>
<svg class="a" style="left:105px;top:162px" width="16" height="16"><use href="#i-bP"/></svg>
<span class="t" style="left:127px;top:165px;transform:scaleX(1.013);transform-origin:0 0">Plenum</span>
<svg class="a" style="left:105px;top:182px" width="16" height="16"><use href="#i-bM"/></svg>
<span class="t" style="left:127px;top:185px;transform:scaleX(1.076);transform-origin:0 0">Momentum</span>
<svg class="a" style="left:105px;top:202px" width="16" height="16"><use href="#i-bE"/></svg>
<span class="t" style="left:127px;top:205px;transform:scaleX(0.969);transform-origin:0 0">Elevation</span>
<svg class="a" style="left:105px;top:222px" width="16" height="16"><use href="#i-bI"/></svg>
<span class="t" style="left:127px;top:225px;transform:scaleX(1.015);transform-origin:0 0">Inertial</span>
<svg class="a" style="left:70px;top:244px" width="7" height="7"><path d="M0.5 6.5 L6.5 6.5 L6.5 0.5 Z" fill="#404040" stroke="#262626" stroke-width="1" stroke-linejoin="round"/></svg>
<span class="t" style="left:85px;top:243px;transform:scaleX(1.021);transform-origin:0 0">Non-Boundary</span>
<svg class="a" style="left:105px;top:259px" width="16" height="16"><use href="#i-nP"/></svg>
<span class="t" style="left:127px;top:262px;transform:scaleX(1.013);transform-origin:0 0">Plenum</span>
<svg class="a" style="left:105px;top:279px" width="16" height="16"><use href="#i-nM"/></svg>
<span class="t" style="left:127px;top:282px;transform:scaleX(1.076);transform-origin:0 0">Momentum</span>
<svg class="a" style="left:105px;top:299px" width="16" height="16"><use href="#i-nE"/></svg>
<span class="t" style="left:127px;top:302px;transform:scaleX(0.969);transform-origin:0 0">Elevation</span>
<svg class="a" style="left:105px;top:319px" width="16" height="16"><use href="#i-nI"/></svg>
<span class="t" style="left:127px;top:322px;transform:scaleX(1.015);transform-origin:0 0">Inertial</span>
<svg class="a" style="left:105px;top:339px" width="16" height="16"><use href="#i-nV"/></svg>
<span class="t" style="left:127px;top:342px;transform:scaleX(0.974);transform-origin:0 0">Vortex Chamber</span>
<svg class="a" style="left:50px;top:361px" width="7" height="7"><path d="M0.5 6.5 L6.5 6.5 L6.5 0.5 Z" fill="#404040" stroke="#262626" stroke-width="1" stroke-linejoin="round"/></svg>
<span class="t" style="left:65px;top:360px;transform:scaleX(0.953);transform-origin:0 0">Compressible Gas Elements</span>
<svg class="a" style="left:85px;top:376px" width="16" height="16"><use href="#i-blank"/></svg>
<span class="t" style="left:107px;top:379px;transform:scaleX(0.953);transform-origin:0 0">Blank End</span>
<svg class="a" style="left:85px;top:396px" width="16" height="16"><use href="#i-disc"/></svg>
<span class="t" style="left:107px;top:399px;transform:scaleX(0.939);transform-origin:0 0">Discrete Loss</span>
<svg class="a" style="left:85px;top:416px" width="16" height="16"><use href="#i-disc"/></svg>
<span class="t" style="left:107px;top:419px;transform:scaleX(0.967);transform-origin:0 0">Elevation Element</span>
<svg class="a" style="left:85px;top:436px" width="16" height="16"><use href="#i-drop"/></svg>
<span class="t" style="left:107px;top:439px;transform:scaleX(0.965);transform-origin:0 0">Fluid Source</span>
<svg class="a" style="left:85px;top:456px" width="16" height="16"><use href="#i-fuel"/></svg>
<span class="t" style="left:107px;top:459px;transform:scaleX(0.948);transform-origin:0 0">Fuel Source</span>
<svg class="a" style="left:85px;top:476px" width="16" height="16"><use href="#i-nozzle"/></svg>
<span class="t" style="left:107px;top:479px;transform:scaleX(0.93);transform-origin:0 0">Gas Nozzle</span>
<svg class="a" style="left:85px;top:496px" width="16" height="16"><use href="#i-heater"/></svg>
<span class="t" style="left:107px;top:499px">Heater-Cooler</span>
<svg class="a" style="left:70px;top:517.5px" width="7" height="10"><path d="M1.5 0.8 L5.8 5 L1.5 9.2 Z" fill="none" stroke="#8a8a8a" stroke-width="1"/></svg>
<span class="t" style="left:85px;top:517px;transform:scaleX(1.024);transform-origin:0 0">Accumulators</span>
<svg class="a" style="left:70px;top:534.5px" width="7" height="10"><path d="M1.5 0.8 L5.8 5 L1.5 9.2 Z" fill="none" stroke="#8a8a8a" stroke-width="1"/></svg>
<span class="t" style="left:85px;top:534px;transform:scaleX(0.933);transform-origin:0 0">Bends</span>
<svg class="a" style="left:70px;top:551.5px" width="7" height="10"><path d="M1.5 0.8 L5.8 5 L1.5 9.2 Z" fill="none" stroke="#8a8a8a" stroke-width="1"/></svg>
<span class="t" style="left:85px;top:551px;transform:scaleX(1.039);transform-origin:0 0">Combustion Modeling</span>
<svg class="a" style="left:70px;top:568.5px" width="7" height="10"><path d="M1.5 0.8 L5.8 5 L1.5 9.2 Z" fill="none" stroke="#8a8a8a" stroke-width="1"/></svg>
<span class="t" style="left:85px;top:568px;transform:scaleX(0.978);transform-origin:0 0">Cylinders</span>
<svg class="a" style="left:70px;top:585.5px" width="7" height="10"><path d="M1.5 0.8 L5.8 5 L1.5 9.2 Z" fill="none" stroke="#8a8a8a" stroke-width="1"/></svg>
<span class="t" style="left:85px;top:585px;transform:scaleX(0.972);transform-origin:0 0">Expansions and Contractions</span>
<svg class="a" style="left:70px;top:602.5px" width="7" height="10"><path d="M1.5 0.8 L5.8 5 L1.5 9.2 Z" fill="none" stroke="#8a8a8a" stroke-width="1"/></svg>
<span class="t" style="left:85px;top:602px;transform:scaleX(0.956);transform-origin:0 0">Fans and Compressors</span>
<svg class="a" style="left:70px;top:619.5px" width="7" height="10"><path d="M1.5 0.8 L5.8 5 L1.5 9.2 Z" fill="none" stroke="#8a8a8a" stroke-width="1"/></svg>
<span class="t" style="left:85px;top:619px;transform:scaleX(0.97);transform-origin:0 0">Flow Elements</span>
<svg class="a" style="left:70px;top:636.5px" width="7" height="10"><path d="M1.5 0.8 L5.8 5 L1.5 9.2 Z" fill="none" stroke="#8a8a8a" stroke-width="1"/></svg>
<span class="t" style="left:85px;top:636px">Junctions</span>
<svg class="a" style="left:70px;top:653.5px" width="7" height="10"><path d="M1.5 0.8 L5.8 5 L1.5 9.2 Z" fill="none" stroke="#8a8a8a" stroke-width="1"/></svg>
<span class="t" style="left:85px;top:653px;transform:scaleX(0.969);transform-origin:0 0">Orifice Plates</span>
<svg class="a" style="left:70px;top:670.5px" width="7" height="10"><path d="M1.5 0.8 L5.8 5 L1.5 9.2 Z" fill="none" stroke="#8a8a8a" stroke-width="1"/></svg>
<span class="t" style="left:85px;top:670px;transform:scaleX(0.951);transform-origin:0 0">Orifices and Generic Losses</span>
<svg class="a" style="left:70px;top:687.5px" width="7" height="10"><path d="M1.5 0.8 L5.8 5 L1.5 9.2 Z" fill="none" stroke="#8a8a8a" stroke-width="1"/></svg>
<span class="t" style="left:85px;top:687px;transform:scaleX(0.862);transform-origin:0 0">Seals</span>
<svg class="a" style="left:70px;top:704.5px" width="7" height="10"><path d="M1.5 0.8 L5.8 5 L1.5 9.2 Z" fill="none" stroke="#8a8a8a" stroke-width="1"/></svg>
<span class="t" style="left:85px;top:704px;transform:scaleX(1.005);transform-origin:0 0">Thermal Management</span>
<svg class="a" style="left:70px;top:721.5px" width="7" height="10"><path d="M1.5 0.8 L5.8 5 L1.5 9.2 Z" fill="none" stroke="#8a8a8a" stroke-width="1"/></svg>
<span class="t" style="left:85px;top:721px;transform:scaleX(0.961);transform-origin:0 0">Tubes</span>
<svg class="a" style="left:70px;top:738.5px" width="7" height="10"><path d="M1.5 0.8 L5.8 5 L1.5 9.2 Z" fill="none" stroke="#8a8a8a" stroke-width="1"/></svg>
<span class="t" style="left:85px;top:738px">Valves</span>
<!-- scrollbar -->
<div class="a" style="left:356px;top:109px;width:16px;height:631px;background:#f0f0f0;border-left:1px solid #ececec"></div>
<svg class="a" style="left:356px;top:109px" width="16" height="18"><path d="M4.5 12 L8 8.5 L11.5 12 Z" fill="#3c3c3c"/></svg>
<div class="a" style="left:356px;top:127px;width:15px;height:595px;border:1px solid #979797;border-radius:2px;background:linear-gradient(90deg,#f4f4f4 0,#eaeaea 45%,#d6d6d6 55%,#c9c9d0 90%,#d8d8d8 100%)"></div>
<svg class="a" style="left:359px;top:420px" width="10" height="9"><path d="M1.5 1.5 H8.5 M1.5 4.5 H8.5 M1.5 7.5 H8.5" stroke="#333" stroke-width="1.2"/></svg>
<!-- dock title buttons -->
<svg class="a" style="left:343px;top:91px" width="12" height="12"><path d="M4 3.5 V1.5 H9.5 V6.8 H7" fill="none" stroke="#000" stroke-width="1.2"/><path d="M4 1.9 H9.5" stroke="#000" stroke-width="2"/><rect x="1.6" y="4.6" width="5.4" height="5.4" fill="none" stroke="#000" stroke-width="1.2"/><path d="M1.6 5.2 H7" stroke="#000" stroke-width="2"/></svg>
<svg class="a" style="left:358px;top:91px" width="12" height="12"><path d="M2.3 2.3 L9.7 9.7 M9.7 2.3 L2.3 9.7" stroke="#000" stroke-width="1.7"/></svg>
<!-- vertical tab -->
<div class="a" style="left:373px;top:86px;width:20px;height:654px;background:#f0f0f0"></div>
<div class="a" style="left:392px;top:86px;width:1px;height:654px;background:#fff"></div>
<svg class="a" style="left:370px;top:84px" width="24" height="156"><path d="M22.5 2 C15 3.5 8 5 7.5 11 L7.5 144 C8 149 15 149.5 22.5 151.5 Z" fill="#fff" stroke="none"/><path d="M22.5 2 C15 3.5 8 5 7.5 11 L7.5 144 C8 149 15 149.5 22.5 151.5" fill="none" stroke="#000" stroke-width="1"/></svg>
<span class="rt" style="left:379.7px;top:226.2px;transform:rotate(-90deg) scaleX(0.972)">Flow and Thermal Network</span>

<!-- viewport -->
<div class="a" style="left:393px;top:86px;width:684px;height:654px;background:linear-gradient(#0000ff,#d8d8ff)"></div>
<svg class="a" style="left:393px;top:86px" width="684" height="654"><path d="M385.4 74.6 L361.6 165.1 Q359.3 173.8 360.7 182.7 L383.6 328.1 Q385.0 337.0 390.3 344.3 L487.2 477.7 Q492.5 485.0 500.9 481.7 L566.1 456.3 Q574.5 453.0 576.8 444.3 L601.4 352.2" stroke="rgba(110,110,170,0.32)" stroke-width="9" fill="none" stroke-linejoin="round"/>
<path d="M385.4 74.6 L361.6 165.1 Q359.3 173.8 360.7 182.7 L383.6 328.1 Q385.0 337.0 390.3 344.3 L487.2 477.7 Q492.5 485.0 500.9 481.7 L566.1 456.3 Q574.5 453.0 576.8 444.3 L601.4 352.2" stroke="rgba(225,225,245,0.3)" stroke-width="7" fill="none" stroke-linejoin="round"/>
<path d="M385.4 74.6 L361.6 165.1 Q359.3 173.8 360.7 182.7 L383.6 328.1 Q385.0 337.0 390.3 344.3 L487.2 477.7 Q492.5 485.0 500.9 481.7 L566.1 456.3 Q574.5 453.0 576.8 444.3 L601.4 352.2" stroke="rgba(240,240,255,0.10)" stroke-width="3.0" fill="none" stroke-linejoin="round"/>
<path d="M436.0 417.0 L382.0 420.2 Q369.0 421.0 376.3 431.8 L395.7 460.2 Q403.0 471.0 390.1 472.3 L155.9 495.7 Q143.0 497.0 138.9 509.4 L94.4 645.0" stroke="rgba(110,110,170,0.32)" stroke-width="10.5" fill="none" stroke-linejoin="round"/>
<path d="M436.0 417.0 L382.0 420.2 Q369.0 421.0 376.3 431.8 L395.7 460.2 Q403.0 471.0 390.1 472.3 L155.9 495.7 Q143.0 497.0 138.9 509.4 L94.4 645.0" stroke="rgba(225,225,245,0.36)" stroke-width="8.5" fill="none" stroke-linejoin="round"/>
<path d="M436.0 417.0 L382.0 420.2 Q369.0 421.0 376.3 431.8 L395.7 460.2 Q403.0 471.0 390.1 472.3 L155.9 495.7 Q143.0 497.0 138.9 509.4 L94.4 645.0" stroke="rgba(240,240,255,0.10)" stroke-width="3.5" fill="none" stroke-linejoin="round"/>
<path d="M357.8 121.8 L368.9 135.1 Q372.7 139.7 378.0 142.6 L451.7 183.1 Q457.0 186.0 463.0 185.8 L484.0 185.0" stroke="rgba(90,90,140,0.45)" stroke-width="4.5" fill="none" stroke-linejoin="round"/>
<path d="M357.8 121.8 L368.9 135.1 Q372.7 139.7 378.0 142.6 L451.7 183.1 Q457.0 186.0 463.0 185.8 L484.0 185.0" stroke="rgba(215,215,240,0.45)" stroke-width="2.5" fill="none" stroke-linejoin="round"/>
<path d="M402.5 379.5 L410.0 363.3 Q413.0 357.0 419.9 355.9 L515.0 341.5" stroke="rgba(90,90,140,0.45)" stroke-width="4.5" fill="none" stroke-linejoin="round"/>
<path d="M402.5 379.5 L410.0 363.3 Q413.0 357.0 419.9 355.9 L515.0 341.5" stroke="rgba(215,215,240,0.45)" stroke-width="2.5" fill="none" stroke-linejoin="round"/>
<path d="M452.0 445.0 L458.6 431.3 Q461.7 425.0 468.6 425.9 L553.5 436.3 Q560.4 437.2 567.3 436.2 L586.2 433.6" stroke="rgba(90,90,140,0.45)" stroke-width="4.5" fill="none" stroke-linejoin="round"/>
<path d="M452.0 445.0 L458.6 431.3 Q461.7 425.0 468.6 425.9 L553.5 436.3 Q560.4 437.2 567.3 436.2 L586.2 433.6" stroke="rgba(215,215,240,0.45)" stroke-width="2.5" fill="none" stroke-linejoin="round"/>
<path d="M574.0 399.3 L565.2 388.0 Q563.4 385.6 566.1 386.9 L638.1 422.3 Q640.8 423.6 643.8 423.1 L665.1 419.6" stroke="rgba(90,90,140,0.45)" stroke-width="4" fill="none" stroke-linejoin="round"/>
<path d="M574.0 399.3 L565.2 388.0 Q563.4 385.6 566.1 386.9 L638.1 422.3 Q640.8 423.6 643.8 423.1 L665.1 419.6" stroke="rgba(215,215,240,0.45)" stroke-width="2" fill="none" stroke-linejoin="round"/>
<ellipse cx="385.4" cy="74.6" rx="4.2" ry="2.6" transform="rotate(-14 385.4 74.6)" fill="rgba(200,200,240,0.35)"/>
<ellipse cx="601.4" cy="352.2" rx="4.2" ry="2.6" transform="rotate(-14 601.4 352.2)" fill="rgba(200,200,240,0.35)"/>
<ellipse cx="94.4" cy="645" rx="5" ry="3" transform="rotate(-16 94.4 645)" fill="rgba(225,225,250,0.5)" stroke="rgba(140,140,180,0.4)" stroke-width="0.7"/>
<path d="M400 379 L408 377 L410 381 L401 383 Z" fill="rgba(215,215,240,0.45)" stroke="rgba(150,150,190,0.5)" stroke-width="0.7"/>
<path d="M449 445 L457 443 L459 447 L450 449 Z" fill="rgba(215,215,240,0.45)" stroke="rgba(150,150,190,0.5)" stroke-width="0.7"/>
<ellipse cx="411" cy="416.5" rx="9" ry="13" fill="rgba(200,200,220,0.35)" stroke="rgba(150,150,180,0.5)" stroke-width="1"/>
<path d="M403 416.5 H419 M411 404 V429 M404 409 H418 M404 424 H418" stroke="rgba(160,160,190,0.45)" stroke-width="1"/>
<path d="M358 121 L368 120 L370 125 L361 127 Z" fill="rgba(200,200,220,0.35)" stroke="rgba(170,170,200,0.6)" stroke-width="1"/></svg>
</body></html>
